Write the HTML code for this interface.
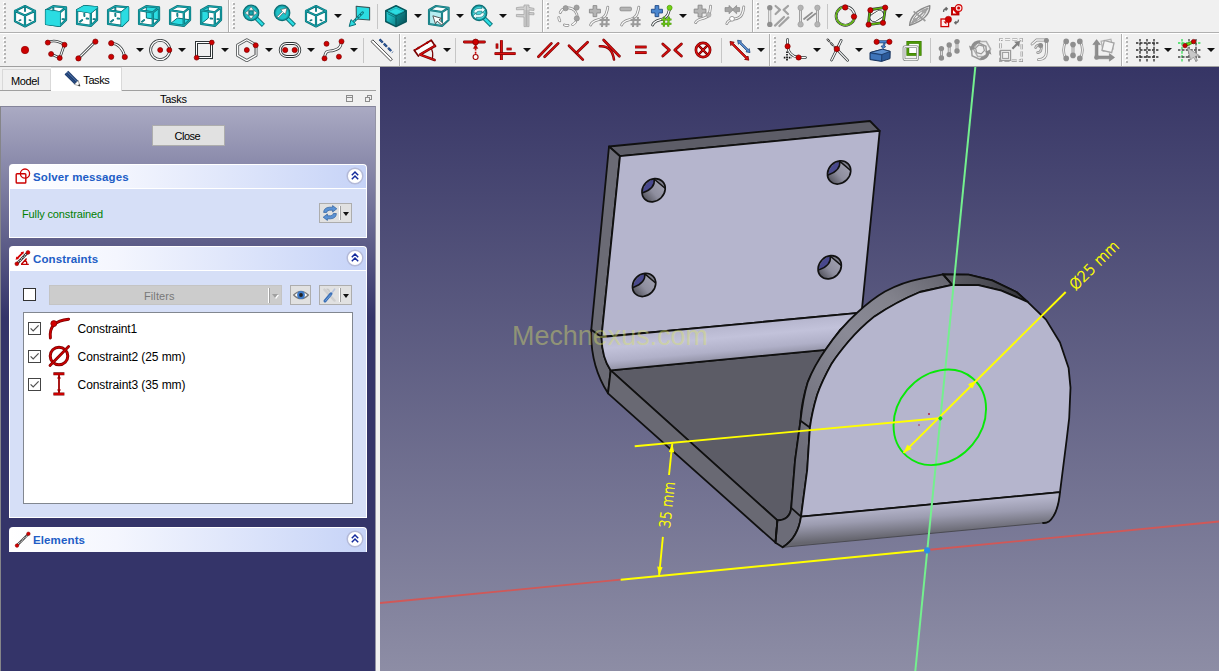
<!DOCTYPE html>
<html lang="en"><head><meta charset="utf-8"><title>FreeCAD Sketcher</title>
<style>
html,body{margin:0;padding:0;}
body{width:1219px;height:671px;overflow:hidden;background:#f0f0f0;font-family:"Liberation Sans",sans-serif;font-size:11px;color:#000;}
#app{position:relative;width:1219px;height:671px;overflow:hidden;background:#f0f0f0;}
.abs{position:absolute;}
#tb{position:absolute;left:0;top:0;width:1219px;height:67px;background:#f0f0f0;}
#tb .line1{position:absolute;left:0;top:32px;width:1219px;height:1px;background:#b0b0b0;}
#tb .line1b{position:absolute;left:0;top:33px;width:1219px;height:1px;background:#fff;}
#tb .line2{position:absolute;left:0;top:66px;width:1219px;height:1px;background:#a0a0a0;}
#tb svg{position:absolute;overflow:visible;}
.sep{position:absolute;width:1px;background:#c8c8c8;}
.dd{position:absolute;width:0;height:0;border-left:4px solid transparent;border-right:4px solid transparent;border-top:4.5px solid #111;}
#side{position:absolute;left:0;top:67px;width:380px;height:604px;background:#f0f0f0;}
#side svg{position:absolute;overflow:visible;}
#tabline{position:absolute;left:0;top:23px;width:376px;height:1px;background:#a0a0a0;}
.tab{position:absolute;box-sizing:border-box;font-size:11px;}
#tabModel{left:2px;top:2px;width:49px;height:21px;border:1px solid #d9d9d9;border-bottom:none;background:#f0f0f0;}
#tabTasks{left:51px;top:0px;width:71px;height:24px;border:1px solid #d9d9d9;border-left:none;border-bottom:none;background:#fff;}
.tab span{position:absolute;white-space:nowrap;}
#dockTitle{position:absolute;left:0;top:24px;width:376px;height:15px;}
#dockTitle span{position:absolute;left:160px;top:2px;white-space:nowrap;letter-spacing:-0.3px;}
#tp{position:absolute;left:0;top:39px;width:376px;height:565px;box-sizing:border-box;border-left:1px solid #858589;border-top:1px solid #84849a;border-right:1px solid #9494a4;
 background:linear-gradient(to bottom,#aaaac3 0px,#343469 210px,#343469 100%);}
#closeBtn{position:absolute;left:152px;top:58px;width:73px;height:21px;box-sizing:border-box;border:1px solid #adadad;background:#e1e1e1;font-size:11px;}
#closeBtn span{position:absolute;left:21.6px;top:4px;letter-spacing:-0.5px;white-space:nowrap;}
.box{position:absolute;left:9px;width:358px;}
.bh{position:absolute;left:0;top:0;width:358px;height:24px;box-sizing:border-box;border-radius:4px 4px 0 0;border:1px solid #fff;border-bottom:none;background:linear-gradient(to right,#ffffff 0%,#f4f6fe 30%,#c6d3f7 100%);}
.bh b{position:absolute;left:23px;top:6px;color:#215dc6;font-size:11.5px;font-weight:bold;white-space:nowrap;letter-spacing:0.12px;}
.bb{position:absolute;left:0;top:24px;width:358px;box-sizing:border-box;border:1px solid #fff;background:#d6dff7;}
.btn{position:absolute;box-sizing:border-box;border:1px solid #adadad;background:#e1e1e1;}
.cb{position:absolute;box-sizing:border-box;width:13px;height:13px;border:1px solid #333;background:#fff;}
#list{position:absolute;left:13px;top:41px;width:330px;height:192px;box-sizing:border-box;border:1px solid #828790;background:#fff;}
.row{position:absolute;left:0;width:328px;height:28px;font-size:12px;}
.row span{position:absolute;left:53.6px;top:7px;white-space:nowrap;}
#combo{position:absolute;left:39px;top:14px;width:233px;height:20px;box-sizing:border-box;border:1px solid #c4c4c4;background:#cccccc;color:#787878;}
#combo span{position:absolute;left:94px;top:4px;letter-spacing:0.1px;}

</style></head>
<body>
<div id="app">
<div id="tb"><div class="line1"></div><div class="line1b"></div><div class="line2"></div>
<svg style="left:3px;top:2px" width="4" height="28" viewBox="0 0 4 28"><rect x="0" y="0" width="2" height="2" fill="#ffffff"/><rect x="1" y="1" width="2" height="2" fill="#b4b4b4"/><rect x="0" y="4" width="2" height="2" fill="#ffffff"/><rect x="1" y="5" width="2" height="2" fill="#b4b4b4"/><rect x="0" y="8" width="2" height="2" fill="#ffffff"/><rect x="1" y="9" width="2" height="2" fill="#b4b4b4"/><rect x="0" y="12" width="2" height="2" fill="#ffffff"/><rect x="1" y="13" width="2" height="2" fill="#b4b4b4"/><rect x="0" y="16" width="2" height="2" fill="#ffffff"/><rect x="1" y="17" width="2" height="2" fill="#b4b4b4"/><rect x="0" y="20" width="2" height="2" fill="#ffffff"/><rect x="1" y="21" width="2" height="2" fill="#b4b4b4"/><rect x="0" y="24" width="2" height="2" fill="#ffffff"/><rect x="1" y="25" width="2" height="2" fill="#b4b4b4"/></svg>
<svg style="left:13px;top:4px" width="24" height="24" viewBox="0 0 24 24"><path d="M12,2 L22,6.9 L22,17.3 L12,22.4 L2,17.3 L2,6.9 Z" fill="#ffffff"/><ellipse cx="7" cy="16.2" rx="1.6" ry="0.8" fill="#0b6f75" transform="rotate(-20 7 16.2)"/><ellipse cx="17" cy="16.2" rx="1.6" ry="0.8" fill="#0b6f75" transform="rotate(20 17 16.2)"/><path d="M12,2 L12,7" fill="none" stroke="#0b6f75" stroke-width="1.8" stroke-linejoin="round" stroke-linecap="round"/><path d="M12,2 L12,7" fill="none" stroke="#17a5ac" stroke-width="0.6000000000000001" stroke-linejoin="round" stroke-linecap="round"/><path d="M12,2 L22,6.9 L22,17.3 L12,22.4 L2,17.3 L2,6.9 Z M2,6.9 L12,11.4 L22,6.9 M12,11.4 L12,22.4" fill="none" stroke="#0b6f75" stroke-width="2.2" stroke-linejoin="round" stroke-linecap="round"/><path d="M12,2 L22,6.9 L22,17.3 L12,22.4 L2,17.3 L2,6.9 Z M2,6.9 L12,11.4 L22,6.9 M12,11.4 L12,22.4" fill="none" stroke="#17a5ac" stroke-width="1.0000000000000002" stroke-linejoin="round" stroke-linecap="round"/></svg>
<svg style="left:44px;top:4px" width="24" height="24" viewBox="0 0 24 24"><path d="M2.1,6.2 L9.2,2.2 L22,3.4 L22,15.8 L15.8,21.8 L2.1,19.9 Z" fill="#ffffff"/><path d="M18.4,15.1 L20,15.2 M9.3,3.6 L9.4,6.6 " fill="none" stroke="#0b6f75" stroke-width="1.9" stroke-linecap="round"/><path d="M18.4,15.1 L20,15.2 M9.3,3.6 L9.4,6.6 " fill="none" stroke="#17a5ac" stroke-width="0.6" stroke-linecap="round"/><path d="M2.1,6.2 L15.8,8.4 L15.8,21.8 L2.1,19.9 Z M2.1,6.2 L9.2,2.2 L22,3.4 L15.8,8.4 M22,3.4 L22,15.8 L15.8,21.8" fill="none" stroke="#0b6f75" stroke-width="2.3" stroke-linejoin="round" stroke-linecap="round"/><path d="M2.1,6.2 L15.8,8.4 L15.8,21.8 L2.1,19.9 Z M2.1,6.2 L9.2,2.2 L22,3.4 L15.8,8.4 M22,3.4 L22,15.8 L15.8,21.8" fill="none" stroke="#17a5ac" stroke-width="1.0999999999999999" stroke-linejoin="round" stroke-linecap="round"/><path d="M2.1,6.2 L15.8,8.4 L15.8,21.8 L2.1,19.9 Z" fill="#2bdce2" stroke="#0b6f75" stroke-width="2.3" stroke-linejoin="round"/><path d="M2.1,6.2 L15.8,8.4 L15.8,21.8 L2.1,19.9 Z" fill="#2bdce2" stroke="#2bdce2" stroke-width="1.1" stroke-linejoin="round"/></svg>
<svg style="left:75px;top:4px" width="24" height="24" viewBox="0 0 24 24"><path d="M2.1,6.2 L9.2,2.2 L22,3.4 L22,15.8 L15.8,21.8 L2.1,19.9 Z" fill="#ffffff"/><path d="M9.3,9.6 L9.4,12 M11.6,14.5 L13.2,14.6 M18.4,15.1 L20,15.2 M5,17.7 L7.2,16 " fill="none" stroke="#0b6f75" stroke-width="1.9" stroke-linecap="round"/><path d="M9.3,9.6 L9.4,12 M11.6,14.5 L13.2,14.6 M18.4,15.1 L20,15.2 M5,17.7 L7.2,16 " fill="none" stroke="#17a5ac" stroke-width="0.6" stroke-linecap="round"/><path d="M2.1,6.2 L15.8,8.4 L15.8,21.8 L2.1,19.9 Z M2.1,6.2 L9.2,2.2 L22,3.4 L15.8,8.4 M22,3.4 L22,15.8 L15.8,21.8" fill="none" stroke="#0b6f75" stroke-width="2.3" stroke-linejoin="round" stroke-linecap="round"/><path d="M2.1,6.2 L15.8,8.4 L15.8,21.8 L2.1,19.9 Z M2.1,6.2 L9.2,2.2 L22,3.4 L15.8,8.4 M22,3.4 L22,15.8 L15.8,21.8" fill="none" stroke="#17a5ac" stroke-width="1.0999999999999999" stroke-linejoin="round" stroke-linecap="round"/><path d="M2.1,6.2 L9.2,2.2 L22,3.4 L15.8,8.4 Z" fill="#2bdce2" stroke="#0b6f75" stroke-width="2.3" stroke-linejoin="round"/><path d="M2.1,6.2 L9.2,2.2 L22,3.4 L15.8,8.4 Z" fill="#2bdce2" stroke="#2bdce2" stroke-width="1.1" stroke-linejoin="round"/></svg>
<svg style="left:106px;top:4px" width="24" height="24" viewBox="0 0 24 24"><path d="M2.1,6.2 L9.2,2.2 L22,3.4 L22,15.8 L15.8,21.8 L2.1,19.9 Z" fill="#ffffff"/><path d="M9.3,9.6 L9.4,12 M11.6,14.5 L13.2,14.6 M5,17.7 L7.2,16 M9.3,3.6 L9.4,6.6 " fill="none" stroke="#0b6f75" stroke-width="1.9" stroke-linecap="round"/><path d="M9.3,9.6 L9.4,12 M11.6,14.5 L13.2,14.6 M5,17.7 L7.2,16 M9.3,3.6 L9.4,6.6 " fill="none" stroke="#17a5ac" stroke-width="0.6" stroke-linecap="round"/><path d="M2.1,6.2 L15.8,8.4 L15.8,21.8 L2.1,19.9 Z M2.1,6.2 L9.2,2.2 L22,3.4 L15.8,8.4 M22,3.4 L22,15.8 L15.8,21.8" fill="none" stroke="#0b6f75" stroke-width="2.3" stroke-linejoin="round" stroke-linecap="round"/><path d="M2.1,6.2 L15.8,8.4 L15.8,21.8 L2.1,19.9 Z M2.1,6.2 L9.2,2.2 L22,3.4 L15.8,8.4 M22,3.4 L22,15.8 L15.8,21.8" fill="none" stroke="#17a5ac" stroke-width="1.0999999999999999" stroke-linejoin="round" stroke-linecap="round"/><path d="M15.8,8.4 L22,3.4 L22,15.8 L15.8,21.8 Z" fill="#2bdce2" stroke="#0b6f75" stroke-width="2.3" stroke-linejoin="round"/><path d="M15.8,8.4 L22,3.4 L22,15.8 L15.8,21.8 Z" fill="#2bdce2" stroke="#2bdce2" stroke-width="1.1" stroke-linejoin="round"/></svg>
<svg style="left:137px;top:4px" width="24" height="24" viewBox="0 0 24 24"><path d="M2.1,6.2 L9.2,2.2 L22,3.4 L22,15.8 L15.8,21.8 L2.1,19.9 Z" fill="#ffffff"/><path d="M9.2,2.2 L22,3.4 L22,15.8 L9.4,14 Z" fill="#2bdce2" stroke="#0b6f75" stroke-width="1" stroke-linejoin="round"/><path d="M5,17.7 L7.2,16 " fill="none" stroke="#0b6f75" stroke-width="1.9" stroke-linecap="round"/><path d="M5,17.7 L7.2,16 " fill="none" stroke="#17a5ac" stroke-width="0.6" stroke-linecap="round"/><path d="M2.1,6.2 L15.8,8.4 L15.8,21.8 L2.1,19.9 Z M2.1,6.2 L9.2,2.2 L22,3.4 L15.8,8.4 M22,3.4 L22,15.8 L15.8,21.8" fill="none" stroke="#0b6f75" stroke-width="2.3" stroke-linejoin="round" stroke-linecap="round"/><path d="M2.1,6.2 L15.8,8.4 L15.8,21.8 L2.1,19.9 Z M2.1,6.2 L9.2,2.2 L22,3.4 L15.8,8.4 M22,3.4 L22,15.8 L15.8,21.8" fill="none" stroke="#17a5ac" stroke-width="1.0999999999999999" stroke-linejoin="round" stroke-linecap="round"/></svg>
<svg style="left:168px;top:4px" width="24" height="24" viewBox="0 0 24 24"><path d="M2.1,6.2 L9.2,2.2 L22,3.4 L22,15.8 L15.8,21.8 L2.1,19.9 Z" fill="#ffffff"/><path d="M2.1,19.9 L15.8,21.8 L22,15.8 L9.4,14 Z" fill="#2bdce2" stroke="#0b6f75" stroke-width="1" stroke-linejoin="round"/><path d="M9.3,9.6 L9.4,12 " fill="none" stroke="#0b6f75" stroke-width="1.9" stroke-linecap="round"/><path d="M9.3,9.6 L9.4,12 " fill="none" stroke="#17a5ac" stroke-width="0.6" stroke-linecap="round"/><path d="M2.1,6.2 L15.8,8.4 L15.8,21.8 L2.1,19.9 Z M2.1,6.2 L9.2,2.2 L22,3.4 L15.8,8.4 M22,3.4 L22,15.8 L15.8,21.8" fill="none" stroke="#0b6f75" stroke-width="2.3" stroke-linejoin="round" stroke-linecap="round"/><path d="M2.1,6.2 L15.8,8.4 L15.8,21.8 L2.1,19.9 Z M2.1,6.2 L9.2,2.2 L22,3.4 L15.8,8.4 M22,3.4 L22,15.8 L15.8,21.8" fill="none" stroke="#17a5ac" stroke-width="1.0999999999999999" stroke-linejoin="round" stroke-linecap="round"/></svg>
<svg style="left:199px;top:4px" width="24" height="24" viewBox="0 0 24 24"><path d="M2.1,6.2 L9.2,2.2 L22,3.4 L22,15.8 L15.8,21.8 L2.1,19.9 Z" fill="#ffffff"/><path d="M2.1,6.2 L9.2,2.2 L9.4,14 L2.1,19.9 Z" fill="#2bdce2" stroke="#0b6f75" stroke-width="1" stroke-linejoin="round"/><path d="M11.6,14.5 L13.2,14.6 M18.4,15.1 L20,15.2 " fill="none" stroke="#0b6f75" stroke-width="1.9" stroke-linecap="round"/><path d="M11.6,14.5 L13.2,14.6 M18.4,15.1 L20,15.2 " fill="none" stroke="#17a5ac" stroke-width="0.6" stroke-linecap="round"/><path d="M2.1,6.2 L15.8,8.4 L15.8,21.8 L2.1,19.9 Z M2.1,6.2 L9.2,2.2 L22,3.4 L15.8,8.4 M22,3.4 L22,15.8 L15.8,21.8" fill="none" stroke="#0b6f75" stroke-width="2.3" stroke-linejoin="round" stroke-linecap="round"/><path d="M2.1,6.2 L15.8,8.4 L15.8,21.8 L2.1,19.9 Z M2.1,6.2 L9.2,2.2 L22,3.4 L15.8,8.4 M22,3.4 L22,15.8 L15.8,21.8" fill="none" stroke="#17a5ac" stroke-width="1.0999999999999999" stroke-linejoin="round" stroke-linecap="round"/></svg>
<div class="sep" style="left:228px;top:0px;height:32px;background:#b0b0b0"></div><div class="sep" style="left:229px;top:0px;height:32px;background:#ffffff"></div>
<svg style="left:232px;top:2px" width="4" height="28" viewBox="0 0 4 28"><rect x="0" y="0" width="2" height="2" fill="#ffffff"/><rect x="1" y="1" width="2" height="2" fill="#b4b4b4"/><rect x="0" y="4" width="2" height="2" fill="#ffffff"/><rect x="1" y="5" width="2" height="2" fill="#b4b4b4"/><rect x="0" y="8" width="2" height="2" fill="#ffffff"/><rect x="1" y="9" width="2" height="2" fill="#b4b4b4"/><rect x="0" y="12" width="2" height="2" fill="#ffffff"/><rect x="1" y="13" width="2" height="2" fill="#b4b4b4"/><rect x="0" y="16" width="2" height="2" fill="#ffffff"/><rect x="1" y="17" width="2" height="2" fill="#b4b4b4"/><rect x="0" y="20" width="2" height="2" fill="#ffffff"/><rect x="1" y="21" width="2" height="2" fill="#b4b4b4"/><rect x="0" y="24" width="2" height="2" fill="#ffffff"/><rect x="1" y="25" width="2" height="2" fill="#b4b4b4"/></svg>
<svg style="left:242px;top:4px" width="24" height="24" viewBox="0 0 24 24"><path d="M13.2,13.2 L21.4,21.4" stroke="#0b6f75" stroke-width="4.4" stroke-linecap="butt"/><path d="M13.6,13.6 L20.9,20.9" stroke="#2bdce2" stroke-width="2.6" stroke-linecap="butt"/><circle cx="9.1" cy="8.9" r="7.7" fill="#17a5ac" stroke="#0b6f75" stroke-width="1.2"/><circle cx="9.1" cy="8.9" r="6" fill="#1fc3c9"/><path d="M9.1,2.8 L11.6,6.2 L6.6,6.2 Z M9.1,15 L11.6,11.6 L6.6,11.6 Z M3,8.9 L6.4,6.4 L6.4,11.4 Z M15.2,8.9 L11.8,6.4 L11.8,11.4 Z" fill="#ffffff" stroke="#444" stroke-width="0.5"/><rect x="7.3" y="7.1" width="3.6" height="3.6" fill="#17a5ac" stroke="#0b6f75" stroke-width="0.6"/></svg>
<svg style="left:273px;top:4px" width="24" height="24" viewBox="0 0 24 24"><path d="M13.2,13.2 L21.4,21.4" stroke="#0b6f75" stroke-width="4.4" stroke-linecap="butt"/><path d="M13.6,13.6 L20.9,20.9" stroke="#2bdce2" stroke-width="2.6" stroke-linecap="butt"/><circle cx="9.1" cy="8.9" r="7.7" fill="#17a5ac" stroke="#0b6f75" stroke-width="1.2"/><circle cx="9.1" cy="8.9" r="6" fill="#1fc3c9"/><path d="M4.2,12.6 L9.4,7.4 L7.6,5.6 L14,4 L12.4,10.4 L10.6,8.6 L5.4,13.8 Z" fill="#ffffff" stroke="#444" stroke-width="0.6" stroke-linejoin="round"/></svg>
<svg style="left:304px;top:4px" width="24" height="24" viewBox="0 0 24 24"><path d="M12,2 L22,6.9 L22,17.3 L12,22.4 L2,17.3 L2,6.9 Z" fill="#ffffff"/><ellipse cx="7" cy="16.2" rx="1.6" ry="0.8" fill="#0b6f75" transform="rotate(-20 7 16.2)"/><ellipse cx="17" cy="16.2" rx="1.6" ry="0.8" fill="#0b6f75" transform="rotate(20 17 16.2)"/><path d="M12,2 L12,7" fill="none" stroke="#0b6f75" stroke-width="1.8" stroke-linejoin="round" stroke-linecap="round"/><path d="M12,2 L12,7" fill="none" stroke="#17a5ac" stroke-width="0.6000000000000001" stroke-linejoin="round" stroke-linecap="round"/><path d="M12,2 L22,6.9 L22,17.3 L12,22.4 L2,17.3 L2,6.9 Z M2,6.9 L12,11.4 L22,6.9 M12,11.4 L12,22.4" fill="none" stroke="#0b6f75" stroke-width="2.2" stroke-linejoin="round" stroke-linecap="round"/><path d="M12,2 L22,6.9 L22,17.3 L12,22.4 L2,17.3 L2,6.9 Z M2,6.9 L12,11.4 L22,6.9 M12,11.4 L12,22.4" fill="none" stroke="#17a5ac" stroke-width="1.0000000000000002" stroke-linejoin="round" stroke-linecap="round"/></svg>
<div class="dd" style="left:333.8px;top:13.8px"></div>
<svg style="left:348px;top:4px" width="24" height="24" viewBox="0 0 24 24"><path d="M8.2,2.2 L21.6,3.6 L21.6,16 L8.4,15 Z" fill="#2bdce2" stroke="#3a5a5c" stroke-width="1.1" stroke-linejoin="round"/><path d="M14.6,8.6 L5,18.4" stroke="#0b6f75" stroke-width="2.6" stroke-linecap="round"/><path d="M14.6,8.6 L5,18.4" stroke="#2bdce2" stroke-width="1.1" stroke-dasharray="2.2 1.4"/><path d="M1.2,22.4 L3,15.6 L8,20.4 Z" fill="#2bdce2" stroke="#0b6f75" stroke-width="1" stroke-linejoin="round"/></svg>
<div class="sep" style="left:377px;top:4px;height:25px;background:#c6c6c6"></div>
<svg style="left:384px;top:4px" width="24" height="24" viewBox="0 0 24 24"><defs><linearGradient id="sc1" x1="0" y1="0" x2="1" y2="1"><stop offset="0" stop-color="#2bdce2"/><stop offset="1" stop-color="#0e7f86"/></linearGradient><linearGradient id="sc2" x1="0" y1="0" x2="1" y2="1"><stop offset="0" stop-color="#12959c"/><stop offset="1" stop-color="#064a50"/></linearGradient></defs><path d="M12,1.6 L22.4,6.6 L12,11.6 L1.6,6.6 Z" fill="#2bdce2"/><path d="M1.6,6.6 L12,11.6 L12,22.8 L1.6,17.6 Z" fill="url(#sc1)"/><path d="M22.4,6.6 L12,11.6 L12,22.8 L22.4,17.6 Z" fill="url(#sc2)"/><path d="M12,1.8 L22.2,6.7 L22.2,17.5 L12,22.6 L1.8,17.5 L1.8,6.7 Z" fill="none" stroke="#07565b" stroke-width="1.5" stroke-linejoin="round"/><path d="M1.8,6.7 L12,11.7 L22.2,6.7 M12,11.7 L12,22.6" fill="none" stroke="#07565b" stroke-width="1.1"/><path d="M3.6,9.6 L12,13.8 L20.4,9.6" fill="none" stroke="#0a7a80" stroke-width="0.9"/><path d="M12,4 L19.4,7.6 L12,11 L4.6,7.6 Z" fill="none" stroke="#17a5ac" stroke-width="0.8"/></svg>
<div class="dd" style="left:413.5px;top:13.8px"></div>
<svg style="left:427px;top:4px" width="24" height="24" viewBox="0 0 24 24"><path d="M2,6 L9,2 L21.6,3.8 L21.6,16 L15,22 L2,20 Z" fill="#ffffff"/><path d="M2.6,6.6 L15,8.4 L15,21.4 L2.6,19.6 Z" fill="#b5ecf0"/><path d="M2,6 L15,8 L15,22 L2,20 Z M2,6 L9,2 L21.6,3.8 L15,8 M21.6,3.8 L21.6,16 L15,22" fill="none" stroke="#0b6f75" stroke-width="2.1" stroke-linejoin="round"/><path d="M2,6 L15,8 L15,22 L2,20 Z M2,6 L9,2 L21.6,3.8 L15,8 M21.6,3.8 L21.6,16 L15,22" fill="none" stroke="#3aa9af" stroke-width="0.7" stroke-linejoin="round"/><path d="M7,11 L7,19.5 L9.4,17.4 L12.6,22.4 L14.4,21.4 L11.6,16.6 L14.6,16.2 Z" fill="#ffffff" stroke="#555" stroke-width="0.9" stroke-linejoin="round" transform="rotate(-18 9 15)"/></svg>
<div class="dd" style="left:456.4px;top:13.8px"></div>
<svg style="left:470px;top:4px" width="24" height="24" viewBox="0 0 24 24"><path d="M13.2,13.2 L21.4,21.4" stroke="#0b6f75" stroke-width="4.4" stroke-linecap="butt"/><path d="M13.6,13.6 L20.9,20.9" stroke="#2bdce2" stroke-width="2.6" stroke-linecap="butt"/><circle cx="9.1" cy="8.9" r="7.7" fill="#17a5ac" stroke="#0b6f75" stroke-width="1.2"/><circle cx="9.1" cy="8.9" r="6" fill="#1fc3c9"/><circle cx="9.1" cy="8.9" r="6" fill="#4fd6db"/><path d="M3.6,8.6 Q4.6,4.4 9,4.4 L12,4.4 L12,2.6 L15.2,5.8 L12,9 L12,7.2 L9,7.2 Q6.8,7.2 6.4,9.2 Z" fill="#e8fafb" stroke="#0b6f75" stroke-width="0.6"/><path d="M14.6,9.2 Q13.6,13.4 9.2,13.4 L6.2,13.4 L6.2,15.2 L3,12 L6.2,8.8 L6.2,10.6 L9.2,10.6 Q11.4,10.6 11.8,8.6 Z" fill="#e8fafb" stroke="#0b6f75" stroke-width="0.6"/></svg>
<div class="dd" style="left:499.3px;top:13.8px"></div>
<svg style="left:513px;top:4px" width="24" height="24" viewBox="0 0 24 24"><path d="M3.4,3.6 L8,3 L11,3 L11,1 L16,1 L16,3.4 L21,4.4 L21,6.4 L16,6 L16,22.6 L11,22.6 L11,13 L3.4,12.6 L3.4,10.4 L11,10.6 L11,5.6 L3.4,5.8 Z" fill="#d0d0d0" stroke="#a6a6a6" stroke-width="0.8" stroke-linejoin="round"/><path d="M16,8.4 L21,8.8 L21,10.8 L16,10.6 Z" fill="#d0d0d0" stroke="#a6a6a6" stroke-width="0.8"/><path d="M12,7 L15,7 M12,9 L15,9 M12,11 L15,11 M12,13 L15,13 M12,15 L15,15 M12,17 L15,17 M12,19 L15,19 M12,21 L15,21" stroke="#a6a6a6" stroke-width="0.7"/><path d="M13.5,2 L13.5,22" stroke="#a6a6a6" stroke-width="0.6"/></svg>
<div class="sep" style="left:542px;top:0px;height:32px;background:#b0b0b0"></div><div class="sep" style="left:543px;top:0px;height:32px;background:#ffffff"></div>
<svg style="left:546px;top:2px" width="4" height="28" viewBox="0 0 4 28"><rect x="0" y="0" width="2" height="2" fill="#ffffff"/><rect x="1" y="1" width="2" height="2" fill="#b4b4b4"/><rect x="0" y="4" width="2" height="2" fill="#ffffff"/><rect x="1" y="5" width="2" height="2" fill="#b4b4b4"/><rect x="0" y="8" width="2" height="2" fill="#ffffff"/><rect x="1" y="9" width="2" height="2" fill="#b4b4b4"/><rect x="0" y="12" width="2" height="2" fill="#ffffff"/><rect x="1" y="13" width="2" height="2" fill="#b4b4b4"/><rect x="0" y="16" width="2" height="2" fill="#ffffff"/><rect x="1" y="17" width="2" height="2" fill="#b4b4b4"/><rect x="0" y="20" width="2" height="2" fill="#ffffff"/><rect x="1" y="21" width="2" height="2" fill="#b4b4b4"/><rect x="0" y="24" width="2" height="2" fill="#ffffff"/><rect x="1" y="25" width="2" height="2" fill="#b4b4b4"/></svg>
<svg style="left:557px;top:4px" width="24" height="24" viewBox="0 0 24 24"><path d="M3.2,8.6 Q4.2,6.4 5.6,5.4" stroke="#8c8c8c" stroke-width="2.8" stroke-linecap="round" fill="none"/><path d="M3.2,8.6 Q4.2,6.4 5.6,5.4" stroke="#fff" stroke-width="1.3" stroke-linecap="round" fill="none"/><path d="M1.8,13.6 Q2,15.6 2.8,16.8" stroke="#8c8c8c" stroke-width="2.8" stroke-linecap="round" fill="none"/><path d="M1.8,13.6 Q2,15.6 2.8,16.8" stroke="#fff" stroke-width="1.3" stroke-linecap="round" fill="none"/><path d="M7.4,21 Q9.4,21.8 11,21.4" stroke="#8c8c8c" stroke-width="2.8" stroke-linecap="round" fill="none"/><path d="M7.4,21 Q9.4,21.8 11,21.4" stroke="#fff" stroke-width="1.3" stroke-linecap="round" fill="none"/><path d="M15.6,20.6 Q17.6,19.4 18.6,18" stroke="#8c8c8c" stroke-width="2.8" stroke-linecap="round" fill="none"/><path d="M15.6,20.6 Q17.6,19.4 18.6,18" stroke="#fff" stroke-width="1.3" stroke-linecap="round" fill="none"/><path d="M8.6,4.4 Q14,2.6 18,7 Q20.4,10 20.6,14.2" fill="none" stroke="#8c8c8c" stroke-width="2.6" stroke-linecap="round"/><path d="M8.6,4.4 Q14,2.6 18,7 Q20.4,10 20.6,14.2" fill="none" stroke="#f4f4f4" stroke-width="1.1" stroke-linecap="round"/><circle cx="8.6" cy="4.2" r="2.6" fill="#a0a0a0" stroke="#8a8a8a" stroke-width="0.6"/><circle cx="19.6" cy="3.6" r="2.6" fill="#a0a0a0" stroke="#8a8a8a" stroke-width="0.6"/><circle cx="19.8" cy="14.4" r="2.6" fill="#a0a0a0" stroke="#8a8a8a" stroke-width="0.6"/></svg>
<svg style="left:588px;top:4px" width="24" height="24" viewBox="0 0 24 24"><path d="M2.6,21 C5,14 15,18 18,10 C19.4,6 19.6,4.6 19.8,3.2" fill="none" stroke="#8c8c8c" stroke-width="2.8" stroke-linecap="round"/><path d="M2.6,21 C5,14 15,18 18,10 C19.4,6 19.6,4.6 19.8,3.2" fill="none" stroke="#f8f8f8" stroke-width="1.2999999999999998" stroke-linecap="round"/><path transform="translate(1.4,1.6) scale(0.92)" d="M4,0 h4 v4 h4 v4 h-4 v4 h-4 v-4 h-4 v-4 h4 Z" fill="#b4b4b4" stroke="#8c8c8c" stroke-width="1" stroke-linejoin="round"/><g transform="translate(11.6,13) scale(1.0)" stroke="#9a9a9a" stroke-width="2" stroke-linecap="butt"><path d="M3,0 L2.4,10 M7.4,0 L6.8,10 M0,3 L10,3 M0,7.2 L10,7.2"/></g></svg>
<svg style="left:619px;top:4px" width="24" height="24" viewBox="0 0 24 24"><path d="M2.6,21 C5,14 15,18 18,10 C19.4,6 19.6,4.6 19.8,3.2" fill="none" stroke="#8c8c8c" stroke-width="2.8" stroke-linecap="round"/><path d="M2.6,21 C5,14 15,18 18,10 C19.4,6 19.6,4.6 19.8,3.2" fill="none" stroke="#f8f8f8" stroke-width="1.2999999999999998" stroke-linecap="round"/><rect x="1" y="3.2" width="11.4" height="3.6" rx="1" fill="#b4b4b4" stroke="#8c8c8c" stroke-width="0.9"/><g transform="translate(11.6,13) scale(1.0)" stroke="#9a9a9a" stroke-width="2" stroke-linecap="butt"><path d="M3,0 L2.4,10 M7.4,0 L6.8,10 M0,3 L10,3 M0,7.2 L10,7.2"/></g></svg>
<svg style="left:650px;top:4px" width="24" height="24" viewBox="0 0 24 24"><path d="M2.6,21 C5,14 15,18 18,10 C19,7 19.4,6 19.6,5" fill="none" stroke="#2e3436" stroke-width="2.8" stroke-linecap="round"/><path d="M2.6,21 C5,14 15,18 18,10 C19,7 19.4,6 19.6,5" fill="none" stroke="#ffffff" stroke-width="1.2999999999999998" stroke-linecap="round"/><path transform="translate(1.4,1.6) scale(0.92)" d="M4,0 h4 v4 h4 v4 h-4 v4 h-4 v-4 h-4 v-4 h4 Z" fill="#4a86cf" stroke="#204a87" stroke-width="1" stroke-linejoin="round"/><g transform="translate(11.4,12.6) scale(1.0)" stroke="#3f8a0a" stroke-width="2" stroke-linecap="butt"><path d="M3,0 L2.4,10 M7.4,0 L6.8,10 M0,3 L10,3 M0,7.2 L10,7.2"/></g><path transform="translate(11.4,12.6)" d="M3,0 L2.4,10 M7.4,0 L6.8,10 M0,3 L10,3 M0,7.2 L10,7.2" stroke="#73d216" stroke-width="0.9"/><circle cx="19.6" cy="3.8" r="2.5" fill="#73d216" stroke="#4e9a06" stroke-width="0.7"/></svg>
<div class="dd" style="left:678.5px;top:13.8px"></div>
<svg style="left:693px;top:4px" width="24" height="24" viewBox="0 0 24 24"><path d="M2.6,18.6 C5,13 13,16 15.6,11 C17,8.4 17.4,5 17.6,2.2" fill="none" stroke="#8c8c8c" stroke-width="2.8" stroke-linecap="round"/><path d="M2.6,18.6 C5,13 13,16 15.6,11 C17,8.4 17.4,5 17.6,2.2" fill="none" stroke="#f8f8f8" stroke-width="1.2999999999999998" stroke-linecap="round"/><path transform="translate(1.2,1.2) scale(0.98)" d="M4,0 h4 v4 h4 v4 h-4 v4 h-4 v-4 h-4 v-4 h4 Z" fill="#b4b4b4" stroke="#8c8c8c" stroke-width="1" stroke-linejoin="round"/><circle cx="15.6" cy="10.8" r="2.4" fill="#b8b8b8" stroke="#999" stroke-width="0.6"/></svg>
<svg style="left:724px;top:4px" width="24" height="24" viewBox="0 0 24 24"><path d="M2.8,19.6 C5,13 14,17.4 17.6,11 C19.4,7.6 19.6,5 19.8,2.8" fill="none" stroke="#8c8c8c" stroke-width="2.8" stroke-linecap="round"/><path d="M2.8,19.6 C5,13 14,17.4 17.6,11 C19.4,7.6 19.6,5 19.8,2.8" fill="none" stroke="#f8f8f8" stroke-width="1.2999999999999998" stroke-linecap="round"/><path d="M1,3.6 h4 v-2.2 l4.4,4.2 l-4.4,4.2 v-2.2 h-4 Z M15.6,3.6 h-3 v-2.2 l-4.4,4.2 l4.4,4.2 v-2.2 h3 Z" fill="#a4a4a4" stroke="#7d7d7d" stroke-width="0.6"/><circle cx="8" cy="14.8" r="2.4" fill="#ffffff" stroke="#8a8a8a" stroke-width="0.8"/></svg>
<div class="sep" style="left:752px;top:0px;height:32px;background:#b0b0b0"></div><div class="sep" style="left:753px;top:0px;height:32px;background:#ffffff"></div>
<svg style="left:756px;top:2px" width="4" height="28" viewBox="0 0 4 28"><rect x="0" y="0" width="2" height="2" fill="#ffffff"/><rect x="1" y="1" width="2" height="2" fill="#b4b4b4"/><rect x="0" y="4" width="2" height="2" fill="#ffffff"/><rect x="1" y="5" width="2" height="2" fill="#b4b4b4"/><rect x="0" y="8" width="2" height="2" fill="#ffffff"/><rect x="1" y="9" width="2" height="2" fill="#b4b4b4"/><rect x="0" y="12" width="2" height="2" fill="#ffffff"/><rect x="1" y="13" width="2" height="2" fill="#b4b4b4"/><rect x="0" y="16" width="2" height="2" fill="#ffffff"/><rect x="1" y="17" width="2" height="2" fill="#b4b4b4"/><rect x="0" y="20" width="2" height="2" fill="#ffffff"/><rect x="1" y="21" width="2" height="2" fill="#b4b4b4"/><rect x="0" y="24" width="2" height="2" fill="#ffffff"/><rect x="1" y="25" width="2" height="2" fill="#b4b4b4"/></svg>
<svg style="left:766px;top:4px" width="24" height="24" viewBox="0 0 24 24"><path d="M3.8,4 L3.8,20" fill="none" stroke="#8a8a8a" stroke-width="2.8" stroke-linecap="round"/><path d="M3.8,4 L3.8,20" fill="none" stroke="#f6f6f6" stroke-width="1.2999999999999998" stroke-linecap="round"/><circle cx="3.8" cy="3.8" r="2.7" fill="#8e8e8e"/><circle cx="3.8" cy="20.4" r="2.7" fill="#8e8e8e"/><path d="M9.6,2 L14,5.8 L9.6,10 M22,2 L17.6,5.8 L22,10" fill="none" stroke="#a2a2a2" stroke-width="2.2" stroke-linecap="round" stroke-linejoin="round"/><path d="M9,21.6 L18,13 M13.4,22 L22.4,13.4" fill="none" stroke="#a2a2a2" stroke-width="2.2" stroke-linecap="round"/></svg>
<svg style="left:797px;top:4px" width="24" height="24" viewBox="0 0 24 24"><path d="M3.6,4 L3.6,20" fill="none" stroke="#8a8a8a" stroke-width="2.8" stroke-linecap="round"/><path d="M3.6,4 L3.6,20" fill="none" stroke="#e0e0e0" stroke-width="1.2999999999999998" stroke-linecap="round"/><path d="M20.4,4 L20.4,20" fill="none" stroke="#8a8a8a" stroke-width="2.8" stroke-linecap="round"/><path d="M20.4,4 L20.4,20" fill="none" stroke="#e0e0e0" stroke-width="1.2999999999999998" stroke-linecap="round"/><circle cx="3.6" cy="3.8" r="2.7" fill="#b4b4b4" stroke="#9a9a9a" stroke-width="0.6"/><circle cx="3.6" cy="20.4" r="2.7" fill="#b4b4b4" stroke="#9a9a9a" stroke-width="0.6"/><circle cx="20.4" cy="3.8" r="2.7" fill="#b4b4b4" stroke="#9a9a9a" stroke-width="0.6"/><circle cx="20.4" cy="20.4" r="2.7" fill="#b4b4b4" stroke="#9a9a9a" stroke-width="0.6"/><path d="M7,15 L15,8.6 M10.4,16 L18.4,9.6" fill="none" stroke="#8e8e8e" stroke-width="1.8" stroke-linecap="round"/></svg>
<div class="sep" style="left:827px;top:4px;height:25px;background:#c6c6c6"></div>
<svg style="left:833px;top:4px" width="24" height="24" viewBox="0 0 24 24"><circle cx="12.4" cy="12" r="9.3" fill="none" stroke="#2e3436" stroke-width="2.8"/><circle cx="12.4" cy="12" r="9.3" fill="none" stroke="#ffffff" stroke-width="1.4"/><path d="M12.4,2.7 A9.3,9.3 0 1 0 21.7,12" fill="none" stroke="#5fb30c" stroke-width="1.6"/><circle cx="12.2" cy="3.4" r="2.7" fill="#cf0000" stroke="#7a0000" stroke-width="0.7"/><circle cx="21" cy="12.6" r="2.7" fill="#cf0000" stroke="#7a0000" stroke-width="0.7"/></svg>
<svg style="left:864px;top:4px" width="24" height="24" viewBox="0 0 24 24"><path d="M6,5.8 L21.4,3.4 L19.2,18.6 L4.4,20.6 Z" fill="#ffffff" stroke="#2e3436" stroke-width="2.9" stroke-linejoin="round"/><path d="M6,5.8 L21.4,3.4 L19.2,18.6 L4.4,20.6 Z" fill="none" stroke="#5fb30c" stroke-width="1.6" stroke-linejoin="round"/><rect x="6.6" y="9" width="12.4" height="6" rx="3" fill="#fff" stroke="#2e3436" stroke-width="2.6" transform="rotate(-32 12.8 12)"/><rect x="6.6" y="9" width="12.4" height="6" rx="3" fill="#eeeeee" stroke="#fff" stroke-width="1.1" transform="rotate(-32 12.8 12)"/><circle cx="6.4" cy="6.2" r="2.6" fill="#cf0000" stroke="#7a0000" stroke-width="0.7"/><circle cx="21.2" cy="3.6" r="2.6" fill="#cf0000" stroke="#7a0000" stroke-width="0.7"/><circle cx="19" cy="18.8" r="2.6" fill="#cf0000" stroke="#7a0000" stroke-width="0.7"/><circle cx="4.6" cy="20.6" r="2.6" fill="#cf0000" stroke="#7a0000" stroke-width="0.7"/></svg>
<div class="dd" style="left:894.5px;top:13.8px"></div>
<svg style="left:908px;top:4px" width="24" height="24" viewBox="0 0 24 24"><path d="M1.6,21.4 Q2.6,7.6 21.8,1.6 Q22.4,14.6 1.6,21.4 Z" fill="#e4e4e4" stroke="#888" stroke-width="1.4" stroke-linejoin="round"/><path d="M4.4,18.6 Q6,10 18.6,4.6 Q18,13 4.4,18.6 Z" fill="#f4f4f4" stroke="#909090" stroke-width="1"/><path d="M5.6,7.4 L17.4,17 M3.4,19.6 L20.2,4" stroke="#9c9c9c" stroke-width="1.7"/><rect x="13.8" y="5.4" width="3.6" height="3.6" fill="#a4a4a4"/><rect x="5.2" y="14.2" width="3.6" height="3.6" fill="#a4a4a4"/></svg>
<svg style="left:939px;top:4px" width="24" height="24" viewBox="0 0 24 24"><rect x="12.4" y="3.4" width="7.6" height="7.6" fill="#cf0000" stroke="#a80000" stroke-width="0.8"/><circle cx="19.6" cy="4" r="3.4" fill="#ffe0e0" stroke="#cf0000" stroke-width="1.1"/><circle cx="19.6" cy="4" r="1.5" fill="#cf0000"/><path d="M14,9.4 L14,6 L17.4,9.4 Z" fill="#fff"/><rect x="2" y="15" width="7.6" height="7.6" fill="#fff0f0" stroke="#cf0000" stroke-width="1.3"/><circle cx="9.4" cy="15.4" r="3.2" fill="#cf0000" stroke="#a80000" stroke-width="0.5"/><path d="M4.4,17.6 L7.4,17.6 L7.4,20.6 Z" fill="#cf0000"/><path d="M4.6,8 Q4.4,4.8 7.6,4.8 M6.6,3.4 L8.2,4.8 L6.6,6.4" fill="none" stroke="#666" stroke-width="1.4"/><path d="M19.4,15.6 Q19.6,18.8 16.4,18.8 M17.4,20.2 L15.8,18.8 L17.4,17.2" fill="none" stroke="#666" stroke-width="1.4"/></svg>
<svg style="left:3px;top:36px" width="4" height="28" viewBox="0 0 4 28"><rect x="0" y="0" width="2" height="2" fill="#ffffff"/><rect x="1" y="1" width="2" height="2" fill="#b4b4b4"/><rect x="0" y="4" width="2" height="2" fill="#ffffff"/><rect x="1" y="5" width="2" height="2" fill="#b4b4b4"/><rect x="0" y="8" width="2" height="2" fill="#ffffff"/><rect x="1" y="9" width="2" height="2" fill="#b4b4b4"/><rect x="0" y="12" width="2" height="2" fill="#ffffff"/><rect x="1" y="13" width="2" height="2" fill="#b4b4b4"/><rect x="0" y="16" width="2" height="2" fill="#ffffff"/><rect x="1" y="17" width="2" height="2" fill="#b4b4b4"/><rect x="0" y="20" width="2" height="2" fill="#ffffff"/><rect x="1" y="21" width="2" height="2" fill="#b4b4b4"/><rect x="0" y="24" width="2" height="2" fill="#ffffff"/><rect x="1" y="25" width="2" height="2" fill="#b4b4b4"/></svg>
<svg style="left:13px;top:38px" width="24" height="24" viewBox="0 0 24 24"><circle cx="12" cy="12" r="3.7" fill="#cc0000" stroke="#960000" stroke-width="0.7"/></svg>
<svg style="left:44px;top:38px" width="24" height="24" viewBox="0 0 24 24"><path d="M3.8,4.6 Q11,0.6 20.4,6.8 L15.8,20 L7,16" fill="none" stroke="#2e3436" stroke-width="2.6" stroke-linecap="round"/><path d="M3.8,4.6 Q11,0.6 20.4,6.8 L15.8,20 L7,16" fill="none" stroke="#ffffff" stroke-width="1.1" stroke-linecap="round"/><circle cx="3.8" cy="4.6" r="2.5" fill="#cf0000" stroke="#7a0000" stroke-width="0.7"/><circle cx="20.5" cy="6.8" r="2.5" fill="#cf0000" stroke="#7a0000" stroke-width="0.7"/><circle cx="15.7" cy="20" r="2.5" fill="#cf0000" stroke="#7a0000" stroke-width="0.7"/><circle cx="7.1" cy="16" r="2.5" fill="#cf0000" stroke="#7a0000" stroke-width="0.7"/></svg>
<svg style="left:75px;top:38px" width="24" height="24" viewBox="0 0 24 24"><path d="M3.4,20.4 L20.4,3.6" fill="none" stroke="#2e3436" stroke-width="2.8" stroke-linecap="round"/><path d="M3.4,20.4 L20.4,3.6" fill="none" stroke="#ffffff" stroke-width="1.2999999999999998" stroke-linecap="round"/><circle cx="3.4" cy="20.4" r="2.6" fill="#cf0000" stroke="#7a0000" stroke-width="0.7"/><circle cx="20.4" cy="3.6" r="2.6" fill="#cf0000" stroke="#7a0000" stroke-width="0.7"/></svg>
<svg style="left:106px;top:38px" width="24" height="24" viewBox="0 0 24 24"><path d="M5.2,5.2 Q16,6 18.8,19" fill="none" stroke="#2e3436" stroke-width="2.8" stroke-linecap="round"/><path d="M5.2,5.2 Q16,6 18.8,19" fill="none" stroke="#ffffff" stroke-width="1.2999999999999998" stroke-linecap="round"/><circle cx="5.2" cy="5.2" r="2.6" fill="#cf0000" stroke="#7a0000" stroke-width="0.7"/><circle cx="18.8" cy="19" r="2.6" fill="#cf0000" stroke="#7a0000" stroke-width="0.7"/><circle cx="5.2" cy="18.8" r="2.6" fill="#cf0000" stroke="#7a0000" stroke-width="0.7"/></svg>
<div class="dd" style="left:135.5px;top:48.0px"></div>
<svg style="left:148px;top:38px" width="24" height="24" viewBox="0 0 24 24"><circle cx="12.2" cy="12" r="9.6" fill="none" stroke="#2e3436" stroke-width="2.9"/><circle cx="12.2" cy="12" r="9.6" fill="none" stroke="#fff" stroke-width="1.3"/><circle cx="12.2" cy="12" r="2.5" fill="#cf0000" stroke="#7a0000" stroke-width="0.7"/><circle cx="21.3" cy="12" r="2.5" fill="#cf0000" stroke="#7a0000" stroke-width="0.7"/></svg>
<div class="dd" style="left:178.3px;top:48.0px"></div>
<svg style="left:192px;top:38px" width="24" height="24" viewBox="0 0 24 24"><rect x="3.5" y="3.5" width="17" height="17" fill="none" stroke="#2e3436" stroke-width="1"/><rect x="4.5" y="4.5" width="15" height="15" fill="none" stroke="#fff" stroke-width="1"/><rect x="5.5" y="5.5" width="13" height="13" fill="none" stroke="#2e3436" stroke-width="1"/><circle cx="19.8" cy="4.5" r="2.4" fill="#cf0000" stroke="#7a0000" stroke-width="0.7"/><circle cx="4.6" cy="19.7" r="2.4" fill="#cf0000" stroke="#7a0000" stroke-width="0.7"/></svg>
<div class="dd" style="left:221.4px;top:48.0px"></div>
<svg style="left:235px;top:38px" width="24" height="24" viewBox="0 0 24 24"><path d="M11.8,1.8 L21,7 L21,17.4 L11.8,22.6 L2.6,17.4 L2.6,7 Z" fill="none" stroke="#55595a" stroke-width="3" stroke-linejoin="round"/><path d="M11.8,1.8 L21,7 L21,17.4 L11.8,22.6 L2.6,17.4 L2.6,7 Z" fill="none" stroke="#fff" stroke-width="1.3" stroke-linejoin="round"/><path d="M20.2,9 L20.2,17" stroke="#9a9a9a" stroke-width="1.6"/><circle cx="11.8" cy="12" r="2.5" fill="#cf0000" stroke="#7a0000" stroke-width="0.7"/><circle cx="20.7" cy="7.3" r="2.5" fill="#cf0000" stroke="#7a0000" stroke-width="0.7"/></svg>
<div class="dd" style="left:264.5px;top:48.0px"></div>
<svg style="left:278px;top:38px" width="24" height="24" viewBox="0 0 24 24"><rect x="2.2" y="5.5" width="19.6" height="13" rx="6.5" fill="none" stroke="#2e3436" stroke-width="2.9"/><rect x="2.2" y="5.5" width="19.6" height="13" rx="6.5" fill="none" stroke="#fff" stroke-width="1.2"/><circle cx="7.2" cy="12" r="2.6" fill="#cf0000" stroke="#7a0000" stroke-width="0.7"/><circle cx="16.7" cy="12" r="2.6" fill="#cf0000" stroke="#7a0000" stroke-width="0.7"/></svg>
<div class="dd" style="left:307.3px;top:48.0px"></div>
<svg style="left:321px;top:38px" width="24" height="24" viewBox="0 0 24 24"><path d="M3.5,20.4 C4,11 9,13.4 12,12.6 C16,11.6 20,10.6 20.5,3.6" fill="none" stroke="#2e3436" stroke-width="2.8" stroke-linecap="round"/><path d="M3.5,20.4 C4,11 9,13.4 12,12.6 C16,11.6 20,10.6 20.5,3.6" fill="none" stroke="#ffffff" stroke-width="1.2999999999999998" stroke-linecap="round"/><circle cx="5.5" cy="5.8" r="2.5" fill="#cf0000" stroke="#7a0000" stroke-width="0.7"/><circle cx="20.5" cy="3.4" r="2.5" fill="#cf0000" stroke="#7a0000" stroke-width="0.7"/><circle cx="3.5" cy="20.4" r="2.5" fill="#cf0000" stroke="#7a0000" stroke-width="0.7"/><circle cx="17.9" cy="18.7" r="2.5" fill="#cf0000" stroke="#7a0000" stroke-width="0.7"/></svg>
<div class="dd" style="left:350.4px;top:48.0px"></div>
<div class="sep" style="left:363px;top:38px;height:25px;background:#c6c6c6"></div>
<svg style="left:369px;top:38px" width="24" height="24" viewBox="0 0 24 24"><path d="M2,3.6 L21.6,23 L23.4,21.2 L3.8,1.8 Z" fill="#fff" stroke="#4a4a4a" stroke-width="1"/><path d="M10.6,1.4 L23.6,14.4" stroke="#1c3f78" stroke-width="2.4" stroke-dasharray="4.4 1.6"/><path d="M10.6,1.4 L23.6,14.4" stroke="#3465a4" stroke-width="1" stroke-dasharray="4.4 1.6"/></svg>
<div class="sep" style="left:399px;top:34px;height:32px;background:#b0b0b0"></div><div class="sep" style="left:400px;top:34px;height:32px;background:#ffffff"></div>
<svg style="left:403px;top:36px" width="4" height="28" viewBox="0 0 4 28"><rect x="0" y="0" width="2" height="2" fill="#ffffff"/><rect x="1" y="1" width="2" height="2" fill="#b4b4b4"/><rect x="0" y="4" width="2" height="2" fill="#ffffff"/><rect x="1" y="5" width="2" height="2" fill="#b4b4b4"/><rect x="0" y="8" width="2" height="2" fill="#ffffff"/><rect x="1" y="9" width="2" height="2" fill="#b4b4b4"/><rect x="0" y="12" width="2" height="2" fill="#ffffff"/><rect x="1" y="13" width="2" height="2" fill="#b4b4b4"/><rect x="0" y="16" width="2" height="2" fill="#ffffff"/><rect x="1" y="17" width="2" height="2" fill="#b4b4b4"/><rect x="0" y="20" width="2" height="2" fill="#ffffff"/><rect x="1" y="21" width="2" height="2" fill="#b4b4b4"/><rect x="0" y="24" width="2" height="2" fill="#ffffff"/><rect x="1" y="25" width="2" height="2" fill="#b4b4b4"/></svg>
<svg style="left:413px;top:38px" width="24" height="24" viewBox="0 0 24 24"><path d="M1.2,12.4 L18.3,2.2 L22.3,8.3 L5.6,18 Z" fill="#ffffff"/><path d="M1.2,12.4 L18.3,2.2" stroke="#7a0000" stroke-width="1.8"/><path d="M1.2,12.4 L18.3,2.2" stroke="#cf0000" stroke-width="0.9"/><path d="M1.2,12.2 L5.4,18 M18.3,2.2 L22.4,8.4" stroke="#7a0000" stroke-width="1.7" stroke-linecap="round"/><path d="M3,11.6 L5.4,8.8 L6.4,10.6 Z M16.6,3.2 L14.2,6 L13.2,4.2 Z" fill="#cf0000" stroke="#7a0000" stroke-width="0.5"/><path d="M18.4,10.4 Q20.6,15 19.4,20.4" fill="none" stroke="#7a0000" stroke-width="1.1"/><path d="M22,7.8 L7,16.6 L21.6,22" fill="none" stroke="#7a0000" stroke-width="2.60" stroke-linecap="round" stroke-linejoin="round"/><path d="M22,7.8 L7,16.6 L21.6,22" fill="none" stroke="#dc1010" stroke-width="1.20" stroke-linecap="round" stroke-linejoin="round"/></svg>
<div class="dd" style="left:442.5px;top:48.0px"></div>
<div class="sep" style="left:455px;top:38px;height:25px;background:#c6c6c6"></div>
<svg style="left:463px;top:38px" width="24" height="24" viewBox="0 0 24 24"><path d="M1.4,4 L21.4,4" fill="none" stroke="#7a0000" stroke-width="2.90" stroke-linecap="round" stroke-linejoin="round"/><path d="M1.4,4 L21.4,4" fill="none" stroke="#dc1010" stroke-width="1.50" stroke-linecap="round" stroke-linejoin="round"/><circle cx="12.6" cy="4" r="2.9" fill="#cf0000" stroke="#7a0000" stroke-width="0.8"/><path d="M12.6,7 L12.6,16" stroke="#cf0000" stroke-width="1.6" stroke-dasharray="2 1.4"/><path d="M12.6,6.8 L14.8,10.4 L10.4,10.4 Z" fill="#cf0000" stroke="#7a0000" stroke-width="0.5"/><circle cx="12.6" cy="19" r="2.5" fill="#fff" stroke="#a00000" stroke-width="1.1"/></svg>
<svg style="left:493px;top:38px" width="24" height="24" viewBox="0 0 24 24"><path d="M8.4,2.2 L8.4,22" fill="none" stroke="#7a0000" stroke-width="2.90" stroke-linecap="butt" stroke-linejoin="round"/><path d="M8.4,2.2 L8.4,22" fill="none" stroke="#dc1010" stroke-width="1.50" stroke-linecap="butt" stroke-linejoin="round"/><path d="M1.6,15.6 L22.6,15.6" fill="none" stroke="#7a0000" stroke-width="2.90" stroke-linecap="butt" stroke-linejoin="round"/><path d="M1.6,15.6 L22.6,15.6" fill="none" stroke="#dc1010" stroke-width="1.50" stroke-linecap="butt" stroke-linejoin="round"/><path d="M4,5.6 L4,10.6" fill="none" stroke="#7a0000" stroke-width="2.70" stroke-linecap="butt" stroke-linejoin="round"/><path d="M4,5.6 L4,10.6" fill="none" stroke="#dc1010" stroke-width="1.30" stroke-linecap="butt" stroke-linejoin="round"/><path d="M13.6,11 L18.6,11" fill="none" stroke="#7a0000" stroke-width="2.70" stroke-linecap="butt" stroke-linejoin="round"/><path d="M13.6,11 L18.6,11" fill="none" stroke="#dc1010" stroke-width="1.30" stroke-linecap="butt" stroke-linejoin="round"/></svg>
<div class="dd" style="left:522.6px;top:48.0px"></div>
<svg style="left:536px;top:38px" width="24" height="24" viewBox="0 0 24 24"><path d="M2.4,18.8 L15.4,5.4" fill="none" stroke="#7a0000" stroke-width="2.70" stroke-linecap="round" stroke-linejoin="round"/><path d="M2.4,18.8 L15.4,5.4" fill="none" stroke="#dc1010" stroke-width="1.30" stroke-linecap="round" stroke-linejoin="round"/><path d="M8.6,18.8 L22.2,5.4" fill="none" stroke="#7a0000" stroke-width="2.70" stroke-linecap="round" stroke-linejoin="round"/><path d="M8.6,18.8 L22.2,5.4" fill="none" stroke="#dc1010" stroke-width="1.30" stroke-linecap="round" stroke-linejoin="round"/></svg>
<svg style="left:567px;top:38px" width="24" height="24" viewBox="0 0 24 24"><path d="M2,7.8 L15.8,21.6" fill="none" stroke="#7a0000" stroke-width="2.70" stroke-linecap="round" stroke-linejoin="round"/><path d="M2,7.8 L15.8,21.6" fill="none" stroke="#dc1010" stroke-width="1.30" stroke-linecap="round" stroke-linejoin="round"/><path d="M9.6,14.8 L20.6,4.2" fill="none" stroke="#7a0000" stroke-width="2.70" stroke-linecap="round" stroke-linejoin="round"/><path d="M9.6,14.8 L20.6,4.2" fill="none" stroke="#dc1010" stroke-width="1.30" stroke-linecap="round" stroke-linejoin="round"/></svg>
<svg style="left:598px;top:38px" width="24" height="24" viewBox="0 0 24 24"><path d="M1.8,8.2 Q14,7.4 16,21.6" fill="none" stroke="#7a0000" stroke-width="2.50" stroke-linecap="round" stroke-linejoin="round"/><path d="M1.8,8.2 Q14,7.4 16,21.6" fill="none" stroke="#dc1010" stroke-width="1.10" stroke-linecap="round" stroke-linejoin="round"/><path d="M5.6,2 L21.4,18.2" fill="none" stroke="#7a0000" stroke-width="2.70" stroke-linecap="round" stroke-linejoin="round"/><path d="M5.6,2 L21.4,18.2" fill="none" stroke="#dc1010" stroke-width="1.30" stroke-linecap="round" stroke-linejoin="round"/></svg>
<svg style="left:629px;top:38px" width="24" height="24" viewBox="0 0 24 24"><path d="M6,9 L17.6,9" fill="none" stroke="#7a0000" stroke-width="2.90" stroke-linecap="butt" stroke-linejoin="round"/><path d="M6,9 L17.6,9" fill="none" stroke="#dc1010" stroke-width="1.50" stroke-linecap="butt" stroke-linejoin="round"/><path d="M6,14.6 L17.6,14.6" fill="none" stroke="#7a0000" stroke-width="2.90" stroke-linecap="butt" stroke-linejoin="round"/><path d="M6,14.6 L17.6,14.6" fill="none" stroke="#dc1010" stroke-width="1.50" stroke-linecap="butt" stroke-linejoin="round"/></svg>
<svg style="left:660px;top:38px" width="24" height="24" viewBox="0 0 24 24"><path d="M2.8,6 L9.4,12 L2.8,18" fill="none" stroke="#7a0000" stroke-width="2.80" stroke-linecap="round" stroke-linejoin="round"/><path d="M2.8,6 L9.4,12 L2.8,18" fill="none" stroke="#dc1010" stroke-width="1.40" stroke-linecap="round" stroke-linejoin="round"/><path d="M21.4,6 L14.8,12 L21.4,18" fill="none" stroke="#7a0000" stroke-width="2.80" stroke-linecap="round" stroke-linejoin="round"/><path d="M21.4,6 L14.8,12 L21.4,18" fill="none" stroke="#dc1010" stroke-width="1.40" stroke-linecap="round" stroke-linejoin="round"/></svg>
<svg style="left:691px;top:38px" width="24" height="24" viewBox="0 0 24 24"><circle cx="12" cy="12" r="7" fill="#fff"/><path d="M7.2,7.2 L16.8,16.8 M16.8,7.2 L7.2,16.8" fill="none" stroke="#7a0000" stroke-width="2.40" stroke-linecap="round" stroke-linejoin="round"/><path d="M7.2,7.2 L16.8,16.8 M16.8,7.2 L7.2,16.8" fill="none" stroke="#dc1010" stroke-width="1.00" stroke-linecap="round" stroke-linejoin="round"/><circle cx="12" cy="12" r="7.1" fill="none" stroke="#7a0000" stroke-width="2.7"/><circle cx="12" cy="12" r="7.1" fill="none" stroke="#dc1010" stroke-width="1.4"/></svg>
<div class="sep" style="left:721px;top:38px;height:25px;background:#c6c6c6"></div>
<svg style="left:728px;top:38px" width="24" height="24" viewBox="0 0 24 24"><path d="M2,3.4 L6.2,4.2 L5.2,5.2 L19,19 L20,18 L20.8,22.2 L16.6,21.4 L17.6,20.4 L3.8,6.6 L2.8,7.6 Z" fill="#dc1010" stroke="#7a0000" stroke-width="0.8" stroke-linejoin="round"/><path d="M9.6,2.2 L13.6,3 L12.7,3.9 L20.3,11.5 L21.2,10.6 L22,14.6 L18,13.8 L18.9,12.9 L11.3,5.3 L10.4,6.2 Z" fill="#5a8fd0" stroke="#1f4478" stroke-width="0.8" stroke-linejoin="round"/></svg>
<div class="dd" style="left:757.4px;top:48.0px"></div>
<div class="sep" style="left:769px;top:34px;height:32px;background:#b0b0b0"></div><div class="sep" style="left:770px;top:34px;height:32px;background:#ffffff"></div>
<svg style="left:773px;top:36px" width="4" height="28" viewBox="0 0 4 28"><rect x="0" y="0" width="2" height="2" fill="#ffffff"/><rect x="1" y="1" width="2" height="2" fill="#b4b4b4"/><rect x="0" y="4" width="2" height="2" fill="#ffffff"/><rect x="1" y="5" width="2" height="2" fill="#b4b4b4"/><rect x="0" y="8" width="2" height="2" fill="#ffffff"/><rect x="1" y="9" width="2" height="2" fill="#b4b4b4"/><rect x="0" y="12" width="2" height="2" fill="#ffffff"/><rect x="1" y="13" width="2" height="2" fill="#b4b4b4"/><rect x="0" y="16" width="2" height="2" fill="#ffffff"/><rect x="1" y="17" width="2" height="2" fill="#b4b4b4"/><rect x="0" y="20" width="2" height="2" fill="#ffffff"/><rect x="1" y="21" width="2" height="2" fill="#b4b4b4"/><rect x="0" y="24" width="2" height="2" fill="#ffffff"/><rect x="1" y="25" width="2" height="2" fill="#b4b4b4"/></svg>
<svg style="left:783px;top:38px" width="24" height="24" viewBox="0 0 24 24"><path d="M4.6,1.6 L4.6,8" fill="none" stroke="#2e3436" stroke-width="2.8" stroke-linecap="round"/><path d="M4.6,1.6 L4.6,8" fill="none" stroke="#ffffff" stroke-width="1.2999999999999998" stroke-linecap="round"/><path d="M4.6,8.4 Q5.6,18 15.4,19.4" fill="none" stroke="#2e3436" stroke-width="2.6" stroke-linecap="round"/><path d="M4.6,8.4 Q5.6,18 15.4,19.4" fill="none" stroke="#ffffff" stroke-width="1.1" stroke-linecap="round"/><path d="M15.6,19.6 L22.4,19.6" fill="none" stroke="#2e3436" stroke-width="2.8" stroke-linecap="round"/><path d="M15.6,19.6 L22.4,19.6" fill="none" stroke="#ffffff" stroke-width="1.2999999999999998" stroke-linecap="round"/><path d="M4,13.4 L4,23 M0.8,19.6 L8.6,19.6" stroke="#111" stroke-width="1.7" stroke-dasharray="1.6 0.9"/><circle cx="4.6" cy="8.3" r="2.6" fill="#cf0000" stroke="#7a0000" stroke-width="0.7"/><circle cx="15.6" cy="19.5" r="2.6" fill="#cf0000" stroke="#7a0000" stroke-width="0.7"/></svg>
<div class="dd" style="left:812.5px;top:48.0px"></div>
<svg style="left:826px;top:38px" width="24" height="24" viewBox="0 0 24 24"><path d="M15.2,2.4 L5.6,22" fill="none" stroke="#2e3436" stroke-width="2.7" stroke-linecap="round"/><path d="M15.2,2.4 L5.6,22" fill="none" stroke="#ffffff" stroke-width="1.2000000000000002" stroke-linecap="round"/><path d="M11,11.4 L21.6,22.4" fill="none" stroke="#2e3436" stroke-width="2.7" stroke-linecap="round"/><path d="M11,11.4 L21.6,22.4" fill="none" stroke="#ffffff" stroke-width="1.2000000000000002" stroke-linecap="round"/><path d="M1.6,1.6 L9.6,10" stroke="#3a3a3a" stroke-width="2.2" stroke-dasharray="2.4 2.6" stroke-linecap="round"/><path d="M1.6,1.6 L9.6,10" stroke="#e8e8e8" stroke-width="0.8" stroke-dasharray="2.4 2.6" stroke-linecap="round"/><circle cx="10.8" cy="11" r="2.7" fill="#cf0000" stroke="#7a0000" stroke-width="0.7"/></svg>
<div class="dd" style="left:855.4px;top:48.0px"></div>
<svg style="left:868px;top:38px" width="24" height="24" viewBox="0 0 24 24"><path d="M2,14.6 L14.4,11.2 L22.2,13.4 L22,20.6 L13.6,23.4 L2,21.6 Z" fill="#2b5a9a" stroke="#16325c" stroke-width="1" stroke-linejoin="round"/><path d="M2,14.6 L14.4,11.2 L22.2,13.4 L13.8,16.6 Z" fill="#5b8fd0" stroke="#16325c" stroke-width="0.8" stroke-linejoin="round"/><path d="M13.8,16.6 L13.6,23.4" stroke="#16325c" stroke-width="0.8"/><path d="M2.8,15.8 L13.2,17.6 L13,22.4 L2.8,20.8 Z" fill="#3f75ba"/><path d="M9,3.8 L21,3.8" stroke="#1b3f73" stroke-width="3"/><path d="M9,3.8 L21,3.8" stroke="#4a86cf" stroke-width="1.6"/><path d="M15.6,5.4 L14.8,8 L13,8 L15,10.6 L17.8,8.6 L16.4,8.2 L17.2,5.4 Z" fill="#4a86cf" stroke="#1b3f73" stroke-width="0.7"/><circle cx="8.6" cy="3.8" r="2.6" fill="#cf0000" stroke="#7a0000" stroke-width="0.7"/><circle cx="21.4" cy="3.8" r="2.6" fill="#cf0000" stroke="#7a0000" stroke-width="0.7"/></svg>
<svg style="left:899px;top:38px" width="24" height="24" viewBox="0 0 24 24"><rect x="8.8" y="4.4" width="12.4" height="12" fill="#fff" stroke="#3b7a04" stroke-width="2.8"/><rect x="8.8" y="4.4" width="12.4" height="12" fill="none" stroke="#4e9a06" stroke-width="1.6"/><rect x="5" y="8.6" width="13.6" height="13" rx="1.4" fill="none" stroke="#8e9290" stroke-width="2.8"/><rect x="5" y="8.6" width="13.6" height="13" rx="1.4" fill="none" stroke="#f2f2f2" stroke-width="1.1"/></svg>
<div class="sep" style="left:930px;top:38px;height:25px;background:#c6c6c6"></div>
<svg style="left:937px;top:38px" width="24" height="24" viewBox="0 0 24 24"><path d="M4.4,10.6 L4.4,20" fill="none" stroke="#8a8a8a" stroke-width="2.8" stroke-linecap="round"/><path d="M4.4,10.6 L4.4,20" fill="none" stroke="#dcdcdc" stroke-width="1.2999999999999998" stroke-linecap="round"/><circle cx="4.4" cy="10.6" r="2.7" fill="#8e8e8e"/><circle cx="4.4" cy="20" r="2.7" fill="#8e8e8e"/><path d="M12.2,7 L12.2,16.6" fill="none" stroke="#8a8a8a" stroke-width="2.8" stroke-linecap="round"/><path d="M12.2,7 L12.2,16.6" fill="none" stroke="#dcdcdc" stroke-width="1.2999999999999998" stroke-linecap="round"/><circle cx="12.2" cy="7" r="2.7" fill="#8e8e8e"/><circle cx="12.2" cy="16.6" r="2.7" fill="#8e8e8e"/><path d="M20,3.6 L20,13" fill="none" stroke="#8a8a8a" stroke-width="2.8" stroke-linecap="round"/><path d="M20,3.6 L20,13" fill="none" stroke="#dcdcdc" stroke-width="1.2999999999999998" stroke-linecap="round"/><circle cx="20" cy="3.6" r="2.7" fill="#8e8e8e"/><circle cx="20" cy="13" r="2.7" fill="#8e8e8e"/></svg>
<svg style="left:968px;top:38px" width="24" height="24" viewBox="0 0 24 24"><path d="M22.6,11.0 L18.3,18.4 L9.7,18.4 L5.4,11.0 L9.7,3.6 L18.3,3.6 Z" fill="none" stroke="#b0b0b0" stroke-width="1.5"/><path d="M18.6,16.5 L11.7,21.4 L4.1,17.8 L3.4,9.5 L10.3,4.6 L17.9,8.2 Z" fill="none" stroke="#9a9a9a" stroke-width="1.5"/><path d="M16.4,12.6 L13.2,15.8 L8.7,14.7 L7.6,10.2 L10.8,7.0 L15.3,8.1 Z" fill="none" stroke="#9a9a9a" stroke-width="1.2"/><path d="M3,8.6 Q5,2 12.6,2.2 L11.6,5.2 Q7,5 5.8,9.6 L7.4,10.4 L2.4,12.4 L1,7.4 Z" fill="#8e8e8e"/><path d="M21.4,15.6 Q19.6,22.6 12,22.2 L13,19.2 Q17.6,19.4 18.6,14.6 L17,13.8 L22,11.8 L23.4,16.8 Z" fill="#8e8e8e"/></svg>
<svg style="left:999px;top:38px" width="24" height="24" viewBox="0 0 24 24"><rect x="1.4" y="1.4" width="21.4" height="21.4" fill="none" stroke="#8e8e8e" stroke-width="2.4" stroke-dasharray="5 2.2" stroke-dashoffset="2.5"/><rect x="1.4" y="1.4" width="21.4" height="21.4" fill="none" stroke="#f6f6f6" stroke-width="1.1" stroke-dasharray="5 2.2" stroke-dashoffset="2.5"/><rect x="1.6" y="12.4" width="10" height="10" fill="#f0f0f0" stroke="#9a9a9a" stroke-width="1.2"/><rect x="3.6" y="14.4" width="6" height="6" fill="none" stroke="#9a9a9a" stroke-width="1"/><path d="M12.6,10 L17,5.6 L15,3.8 L21,3 L20.2,9 L18.4,7.2 L14.2,11.6 Z" fill="#808080"/></svg>
<svg style="left:1030px;top:38px" width="24" height="24" viewBox="0 0 24 24"><path d="M2,6 L6.6,2 L16.4,2 L16.4,14 Q16.4,21.4 8.4,21.6" fill="none" stroke="#8e8e8e" stroke-width="2.8" stroke-linecap="round"/><path d="M2,6 L6.6,2 L16.4,2 L16.4,14 Q16.4,21.4 8.4,21.6" fill="none" stroke="#f4f4f4" stroke-width="1.2999999999999998" stroke-linecap="round"/><path d="M5.6,9.6 Q6.6,6.6 10.6,6.8 Q12,10 10.8,12.6 Q10,14.6 7.6,14.6" fill="none" stroke="#8e8e8e" stroke-width="2.6" stroke-linecap="round"/><path d="M5.6,9.6 Q6.6,6.6 10.6,6.8 Q12,10 10.8,12.6 Q10,14.6 7.6,14.6" fill="none" stroke="#d8d8d8" stroke-width="1.1" stroke-linecap="round"/><circle cx="16.4" cy="2.6" r="2.5" fill="#8e8e8e"/><circle cx="10.6" cy="7.4" r="2.5" fill="#8e8e8e"/></svg>
<svg style="left:1061px;top:38px" width="24" height="24" viewBox="0 0 24 24"><path d="M4.6,3.6 Q0.6,12 4.6,20.4" fill="none" stroke="#8e8e8e" stroke-width="2.6" stroke-linecap="round"/><path d="M4.6,3.6 Q0.6,12 4.6,20.4" fill="none" stroke="#f4f4f4" stroke-width="1.1" stroke-linecap="round"/><path d="M19.4,3.6 Q23.4,12 19.4,20.4" fill="none" stroke="#8e8e8e" stroke-width="2.6" stroke-linecap="round"/><path d="M19.4,3.6 Q23.4,12 19.4,20.4" fill="none" stroke="#f4f4f4" stroke-width="1.1" stroke-linecap="round"/><path d="M12,7 L12,17" fill="none" stroke="#8a8a8a" stroke-width="2.8" stroke-linecap="round"/><path d="M12,7 L12,17" fill="none" stroke="#dcdcdc" stroke-width="1.2999999999999998" stroke-linecap="round"/><circle cx="5.2" cy="3.4" r="2.8" fill="#8e8e8e"/><circle cx="5.2" cy="20.4" r="2.8" fill="#8e8e8e"/><circle cx="18.8" cy="3.4" r="2.8" fill="#8e8e8e"/><circle cx="18.8" cy="20.4" r="2.8" fill="#8e8e8e"/><circle cx="12" cy="6.6" r="2.8" fill="#8e8e8e"/><circle cx="12" cy="17.4" r="2.8" fill="#8e8e8e"/></svg>
<svg style="left:1092px;top:38px" width="24" height="24" viewBox="0 0 24 24"><rect x="10" y="2.2" width="10" height="10" fill="none" stroke="#b4b4b4" stroke-width="1.3" transform="rotate(-12 15 7)"/><rect x="11" y="3.6" width="10" height="10" fill="#f4f4f4" stroke="#a4a4a4" stroke-width="1.3" transform="rotate(14 16 8.6)"/><path d="M4.6,1.6 L8.4,6.6 L6,6.6 L6,18 L17.4,18 L17.4,15.6 L22.6,19.4 L17.4,23.2 L17.4,20.8 L3.2,20.8 L3.2,6.6 L0.8,6.6 Z" fill="#8e8e8e" stroke="#7a7a7a" stroke-width="0.5"/><circle cx="4.6" cy="19.4" r="2.4" fill="#8e8e8e"/></svg>
<div class="sep" style="left:1121px;top:34px;height:32px;background:#b0b0b0"></div><div class="sep" style="left:1122px;top:34px;height:32px;background:#ffffff"></div>
<svg style="left:1125px;top:36px" width="4" height="28" viewBox="0 0 4 28"><rect x="0" y="0" width="2" height="2" fill="#ffffff"/><rect x="1" y="1" width="2" height="2" fill="#b4b4b4"/><rect x="0" y="4" width="2" height="2" fill="#ffffff"/><rect x="1" y="5" width="2" height="2" fill="#b4b4b4"/><rect x="0" y="8" width="2" height="2" fill="#ffffff"/><rect x="1" y="9" width="2" height="2" fill="#b4b4b4"/><rect x="0" y="12" width="2" height="2" fill="#ffffff"/><rect x="1" y="13" width="2" height="2" fill="#b4b4b4"/><rect x="0" y="16" width="2" height="2" fill="#ffffff"/><rect x="1" y="17" width="2" height="2" fill="#b4b4b4"/><rect x="0" y="20" width="2" height="2" fill="#ffffff"/><rect x="1" y="21" width="2" height="2" fill="#b4b4b4"/><rect x="0" y="24" width="2" height="2" fill="#ffffff"/><rect x="1" y="25" width="2" height="2" fill="#b4b4b4"/></svg>
<svg style="left:1135px;top:38px" width="24" height="24" viewBox="0 0 24 24"><path d="M5,1 L5,23.4" stroke="#2a2a2a" stroke-width="1.3" stroke-dasharray="2.8 1.3" stroke-dashoffset="0.4"/><path d="M1,5 L23.4,5" stroke="#2a2a2a" stroke-width="1.3" stroke-dasharray="2.8 1.3" stroke-dashoffset="0.4"/><path d="M12,1 L12,23.4" stroke="#2a2a2a" stroke-width="1.3" stroke-dasharray="2.8 1.3" stroke-dashoffset="0.4"/><path d="M1,12 L23.4,12" stroke="#2a2a2a" stroke-width="1.3" stroke-dasharray="2.8 1.3" stroke-dashoffset="0.4"/><path d="M19,1 L19,23.4" stroke="#2a2a2a" stroke-width="1.3" stroke-dasharray="2.8 1.3" stroke-dashoffset="0.4"/><path d="M1,19 L23.4,19" stroke="#2a2a2a" stroke-width="1.3" stroke-dasharray="2.8 1.3" stroke-dashoffset="0.4"/></svg>
<div class="dd" style="left:1164.4px;top:48.0px"></div>
<svg style="left:1177px;top:38px" width="24" height="24" viewBox="0 0 24 24"><path d="M5,1 L5,23.4" stroke="#33dd55" stroke-width="1.3" stroke-dasharray="2.8 1.3" stroke-dashoffset="0.4"/><path d="M1,5 L23.4,5" stroke="#33dd55" stroke-width="1.3" stroke-dasharray="2.8 1.3" stroke-dashoffset="0.4"/><path d="M12,1 L12,23.4" stroke="#444" stroke-width="1.3" stroke-dasharray="2.8 1.3" stroke-dashoffset="0.4"/><path d="M1,12 L23.4,12" stroke="#444" stroke-width="1.3" stroke-dasharray="2.8 1.3" stroke-dashoffset="0.4"/><path d="M19,1 L19,23.4" stroke="#444" stroke-width="1.3" stroke-dasharray="2.8 1.3" stroke-dashoffset="0.4"/><path d="M1,19 L23.4,19" stroke="#444" stroke-width="1.3" stroke-dasharray="2.8 1.3" stroke-dashoffset="0.4"/><path d="M8,7.6 L16.6,3.6" stroke="#2e8b0a" stroke-width="3"/><path d="M8,7.6 L16.6,3.6" stroke="#73d216" stroke-width="1.6"/><path d="M10.4,9.6 L22.4,17.6 L18.2,18.4 L20.6,22.4 L18.8,23 L16.4,19.2 L13.6,22 Z" fill="#c8c8c8" stroke="#8a8a8a" stroke-width="0.7"/><circle cx="8" cy="7.6" r="2.2" fill="#cf0000" stroke="#7a0000" stroke-width="0.7"/><circle cx="16.6" cy="3.6" r="2.2" fill="#cf0000" stroke="#7a0000" stroke-width="0.7"/></svg>
<div class="dd" style="left:1207.2px;top:48.0px"></div>
</div>
<div id="side">
 <div id="tabline"></div>
 <div class="tab" id="tabModel"><span style="left:8px;top:5px;letter-spacing:-0.4px">Model</span></div>
 <div class="tab" id="tabTasks">
  <svg style="left:13px;top:1.6px" width="18" height="18" viewBox="0 0 18 18"><g transform="rotate(45 9 9)"><rect x="-0.2" y="6.5" width="14" height="5.2" fill="#1f3d6d"/><rect x="-0.2" y="7.7" width="14" height="0.9" fill="#4f74ac"/><rect x="-0.2" y="9.8" width="14" height="0.8" fill="#2f5590"/><path d="M13.8,6.4 L19,9.1 L13.8,11.8 Z" fill="#ffffff" stroke="#555" stroke-width="0.5"/><path d="M17,8.1 L19.2,9.1 L17,10.1 Z" fill="#222"/></g></svg>
  <span style="left:32.3px;top:6px;letter-spacing:-0.42px">Tasks</span></div>
 <div id="dockTitle"><span>Tasks</span>
  <svg style="left:346px;top:4px" width="8" height="8" viewBox="0 0 8 8"><rect x="0.5" y="0.5" width="6" height="6" fill="none" stroke="#8c8c8c" stroke-width="1"/><rect x="0.5" y="2" width="6" height="1" fill="#8c8c8c"/></svg>
  <svg style="left:365px;top:4px" width="8" height="8" viewBox="0 0 8 8"><rect x="2.5" y="0.5" width="4" height="4" fill="none" stroke="#8c8c8c" stroke-width="1"/><rect x="0.5" y="2.5" width="4" height="4" fill="#f0f0f0" stroke="#8c8c8c" stroke-width="1"/></svg>
 </div>
 <div id="tp"></div>
 <div id="closeBtn"><span>Close</span></div>

 <div class="box" style="top:97px;height:74px">
  <div class="bh">
   <svg style="left:4px;top:2px" width="18" height="18" viewBox="0 0 18 18"><rect x="2.2" y="6.8" width="9.6" height="9.2" rx="0.8" fill="none" stroke="#cc0000" stroke-width="1.4"/><circle cx="11" cy="6.6" r="4.6" fill="none" stroke="#cc0000" stroke-width="1.3"/></svg>
   <b>Solver messages</b>
   <svg style="left:335.3px;top:1.4px" width="20" height="20" viewBox="0 0 20 20"><circle cx="10" cy="10" r="7.8" fill="#ffffff" stroke="#b4bad8" stroke-width="1.5"/><path d="M6.8,9.2 L10,6 L13.2,9.2 M6.8,13.2 L10,10 L13.2,13.2" fill="none" stroke="#12299c" stroke-width="1.5"/></svg>
  </div>
  <div class="bb" style="height:50px">
   <span class="abs" style="left:12px;top:19px;color:#008000;white-space:nowrap;letter-spacing:-0.13px">Fully constrained</span>
   <div class="btn" style="left:309px;top:14px;width:33px;height:20px">
    <svg style="left:2px;top:1px" width="16" height="16" viewBox="0 0 16 16"><path d="M1.6,7.4 Q2,2.4 7.6,2.2 L10.6,2.2 L10.6,0.6 L14.8,3.8 L10.6,7 L10.6,5.2 L7.6,5.2 Q4.8,5.4 4.6,7.6 Z" fill="#5b92d4" stroke="#2c5e9e" stroke-width="0.7"/><path d="M14.4,8.6 Q14,13.6 8.4,13.8 L5.4,13.8 L5.4,15.4 L1.2,12.2 L5.4,9 L5.4,10.8 L8.4,10.8 Q11.2,10.6 11.4,8.4 Z" fill="#5b92d4" stroke="#2c5e9e" stroke-width="0.7"/></svg>
    <div class="abs" style="left:19px;top:2px;width:1px;height:14px;background:#fff"></div><div class="abs" style="left:20px;top:2px;width:1px;height:14px;background:#a0a0a0"></div>
    <div class="dd" style="left:22.5px;top:7.5px;border-left-width:3.6px;border-right-width:3.6px;border-top-width:4.2px"></div>
   </div>
  </div>
 </div>

 <div class="box" style="top:179px;height:272px">
  <div class="bh">
   <svg style="left:4px;top:2px" width="18" height="18" viewBox="0 0 18 18"><path d="M3,14.6 L13.6,3.6" stroke="#222" stroke-width="2.6"/><path d="M3,14.6 L13.6,3.6" stroke="#fff" stroke-width="1.3" stroke-dasharray="1 1"/><circle cx="2.8" cy="14.8" r="1.9" fill="#d40000" stroke="#8a0000" stroke-width="0.5"/><circle cx="14" cy="3.4" r="1.9" fill="#d40000" stroke="#8a0000" stroke-width="0.5"/><path d="M3.2,9.4 L8.4,4" stroke="#d40000" stroke-width="1.8"/><path d="M1.6,10.8 L2.4,7.4 L5,10 Z M10,2.4 L9.2,5.8 L6.6,3.2 Z" fill="#d40000"/><path d="M7,15.4 L14.8,15.4 M7.4,15.2 L12.6,9.6 M11.6,11.4 Q13,13 12.8,15" fill="none" stroke="#c00000" stroke-width="1.4"/></svg>
   <b>Constraints</b>
   <svg style="left:335.3px;top:1.4px" width="20" height="20" viewBox="0 0 20 20"><circle cx="10" cy="10" r="7.8" fill="#ffffff" stroke="#b4bad8" stroke-width="1.5"/><path d="M6.8,9.2 L10,6 L13.2,9.2 M6.8,13.2 L10,10 L13.2,13.2" fill="none" stroke="#12299c" stroke-width="1.5"/></svg>
  </div>
  <div class="bb" style="height:248px">
   <div class="cb" style="left:13px;top:17px"></div>
   <div id="combo"><span>Filters</span>
    <div class="abs" style="left:218px;top:2px;width:1px;height:15px;background:#fff"></div><div class="abs" style="left:219px;top:2px;width:1px;height:15px;background:#a0a0a0"></div>
    <div class="dd" style="left:222.6px;top:9px;border-top-color:#fff;border-left-width:3.8px;border-right-width:3.8px;border-top-width:4.4px"></div>
    <div class="dd" style="left:221.6px;top:8px;border-top-color:#a0a0a0;border-left-width:3.8px;border-right-width:3.8px;border-top-width:4.4px"></div>
   </div>
   <div class="btn" style="left:280px;top:14px;width:21px;height:20px">
    <svg style="left:2px;top:2px" width="16" height="14" viewBox="0 0 16 14"><path d="M0.6,7 Q8,-0.6 15.4,7 Q8,14.6 0.6,7 Z" fill="#ffffff" stroke="#777" stroke-width="1.1"/><circle cx="8" cy="7" r="3.9" fill="#3d7ac8"/><circle cx="8" cy="7" r="1.9" fill="#222"/></svg>
   </div>
   <div class="btn" style="left:309px;top:14px;width:33px;height:20px">
    <svg style="left:2px;top:2px" width="16" height="15" viewBox="0 0 16 15"><path d="M2.4,1.6 L12.6,12.6" stroke="#cfcfcf" stroke-width="2.4" stroke-linecap="round"/><path d="M4.6,1.4 Q7.6,1.2 7.2,4.2" fill="none" stroke="#c8c8c8" stroke-width="1.6"/><path d="M12.6,1.2 L9.4,5.4" stroke="#b8c4dc" stroke-width="1.6" stroke-linecap="round"/><path d="M9,5.8 L3,13" stroke="#3a6fb6" stroke-width="3" stroke-linecap="round"/><path d="M8.6,6.8 L3.6,12.6" stroke="#6fa0dc" stroke-width="1" stroke-linecap="round"/></svg>
    <div class="abs" style="left:19px;top:2px;width:1px;height:14px;background:#fff"></div><div class="abs" style="left:20px;top:2px;width:1px;height:14px;background:#a0a0a0"></div>
    <div class="dd" style="left:22.5px;top:7.5px;border-left-width:3.6px;border-right-width:3.6px;border-top-width:4.2px"></div>
   </div>
   <div id="list">
    <div class="row" style="top:2px">
     <div class="cb" style="left:4px;top:7px;border-color:#444"><svg style="left:0;top:0" width="11" height="11" viewBox="0 0 11 11"><path d="M1.6,5.4 L4.2,8 L9.6,2.4" fill="none" stroke="#505050" stroke-width="1.2"/></svg></div>
     <svg style="left:23px;top:1px" width="24" height="24" viewBox="0 0 24 24"><path d="M3.4,22 Q1.4,5 21.6,3.2" fill="none" stroke="#7a0000" stroke-width="2.9" stroke-linecap="round"/><path d="M3.4,22 Q1.4,5 21.6,3.2" fill="none" stroke="#cc0000" stroke-width="1.6" stroke-linecap="round"/><circle cx="6.8" cy="7.6" r="3" fill="#d40000" stroke="#7a0000" stroke-width="0.7"/></svg>
     <span style="letter-spacing:-0.18px">Constraint1</span>
    </div>
    <div class="row" style="top:30px">
     <div class="cb" style="left:4px;top:7px;border-color:#444"><svg style="left:0;top:0" width="11" height="11" viewBox="0 0 11 11"><path d="M1.6,5.4 L4.2,8 L9.6,2.4" fill="none" stroke="#505050" stroke-width="1.2"/></svg></div>
     <svg style="left:23px;top:1px" width="24" height="24" viewBox="0 0 24 24"><circle cx="12" cy="12" r="8.8" fill="none" stroke="#7a0000" stroke-width="3"/><circle cx="12" cy="12" r="8.8" fill="none" stroke="#cc0000" stroke-width="1.6"/><path d="M3,21.4 L21.6,2.4" stroke="#7a0000" stroke-width="2.8" stroke-linecap="round"/><path d="M3,21.4 L21.6,2.4" stroke="#cc0000" stroke-width="1.5" stroke-linecap="round"/></svg>
     <span style="letter-spacing:-0.08px">Constraint2 (25 mm)</span>
    </div>
    <div class="row" style="top:58px">
     <div class="cb" style="left:4px;top:7px;border-color:#444"><svg style="left:0;top:0" width="11" height="11" viewBox="0 0 11 11"><path d="M1.6,5.4 L4.2,8 L9.6,2.4" fill="none" stroke="#505050" stroke-width="1.2"/></svg></div>
     <svg style="left:23px;top:1px" width="24" height="24" viewBox="0 0 24 24"><path d="M6.4,1.8 L17.4,1.8 M6.4,22 L17.4,22" stroke="#7a0000" stroke-width="3"/><path d="M6.8,1.8 L17,1.8 M6.8,22 L17,22" stroke="#cc0000" stroke-width="1.8"/><path d="M12,3 L12,21" stroke="#a00000" stroke-width="1.8"/><path d="M12,3.2 L14,6.6 L10,6.6 Z M12,20.8 L14,17.4 L10,17.4 Z" fill="#a00000"/></svg>
     <span style="letter-spacing:-0.08px">Constraint3 (35 mm)</span>
    </div>
   </div>
  </div>
 </div>

 <div class="box" style="top:460px;height:25px">
  <div class="bh" style="height:25px">
   <svg style="left:4px;top:2px" width="18" height="18" viewBox="0 0 18 18"><path d="M3,15.4 L14.4,4" stroke="#333" stroke-width="2.4"/><path d="M3,15.4 L14.4,4" stroke="#fff" stroke-width="1.1" stroke-dasharray="1 0.8"/><circle cx="3" cy="15.6" r="1.8" fill="#d40000" stroke="#8a0000" stroke-width="0.5"/><circle cx="14.4" cy="3.8" r="1.8" fill="#d40000" stroke="#8a0000" stroke-width="0.5"/></svg>
   <b>Elements</b>
   <svg style="left:335.3px;top:1.4px" width="20" height="20" viewBox="0 0 20 20"><circle cx="10" cy="10" r="7.8" fill="#ffffff" stroke="#b4bad8" stroke-width="1.5"/><path d="M6.8,9.2 L10,6 L13.2,9.2 M6.8,13.2 L10,10 L13.2,13.2" fill="none" stroke="#12299c" stroke-width="1.5"/></svg>
  </div>
 </div>
</div>

<svg id="vp" width="839" height="604" viewBox="380 67 839 604" style="position:absolute;left:380px;top:67px">
<defs>
<linearGradient id="bg" x1="0" y1="67" x2="0" y2="671" gradientUnits="userSpaceOnUse">
<stop offset="0" stop-color="#363565"/><stop offset="1" stop-color="#8d8da5"/></linearGradient>
<linearGradient id="fil1" x1="735" y1="325" x2="738" y2="358" gradientUnits="userSpaceOnUse">
<stop offset="0" stop-color="#b6b6ce"/><stop offset="0.35" stop-color="#c2c2da"/><stop offset="0.75" stop-color="#b0b0c8"/><stop offset="1" stop-color="#9494a8"/></linearGradient>
<linearGradient id="fil2" x1="930" y1="505" x2="932" y2="534" gradientUnits="userSpaceOnUse">
<stop offset="0" stop-color="#b4b4ca"/><stop offset="0.4" stop-color="#9c9cb0"/><stop offset="1" stop-color="#66666f"/></linearGradient>
<linearGradient id="hole" gradientUnits="userSpaceOnUse" x1="10" y1="1.4" x2="-11.3" y2="0">
<stop offset="0" stop-color="#9e9eae"/><stop offset="0.55" stop-color="#8e8e9e"/><stop offset="1" stop-color="#5c5c66"/></linearGradient>
<linearGradient id="strip" x1="800" y1="460" x2="945" y2="275" gradientUnits="userSpaceOnUse">
<stop offset="0" stop-color="#6c6c78"/><stop offset="0.25" stop-color="#787884"/><stop offset="0.55" stop-color="#8a8a96"/><stop offset="0.78" stop-color="#82828c"/><stop offset="1" stop-color="#666670"/></linearGradient>
<linearGradient id="strip2" x1="945" y1="280" x2="1028" y2="300" gradientUnits="userSpaceOnUse">
<stop offset="0" stop-color="#5e5e66"/><stop offset="0.5" stop-color="#4c4c54"/><stop offset="1" stop-color="#303036"/></linearGradient>
</defs>
<rect x="380" y="67" width="839" height="604" fill="url(#bg)"/>
<polygon points="609,146.5 870,121 879.7,130.8 620,156.2" fill="#5d5d67" stroke="#101010" stroke-width="1.8" stroke-linejoin="round" stroke-linecap="round"/>
<path d="M609,146.5 L620,156.2 L601.5,337 Q602,358 610.7,370.4 L608,393.3 Q590,365 591.3,329.7 Z" fill="#6b6b75" stroke="#101010" stroke-width="1.8" stroke-linejoin="round" stroke-linecap="round"/>
<path d="M591.3,329.7 L601.5,337" fill="none" stroke="#101010" stroke-width="1.8" stroke-linejoin="round" stroke-linecap="round"/>
<path d="M610.7,370.4 L825.5,349.8 Q812,372 807.8,382.1 Q801,404 800.5,420.7 L795.1,460 L791.2,507.9 Q790,520 777.4,520.4 Z" fill="#5c5c66" stroke="#101010" stroke-width="1.8" stroke-linejoin="round" stroke-linecap="round"/>
<polygon points="610.7,370.4 777.4,520.4 775.5,542.7 608,393.3" fill="#696973" stroke="#101010" stroke-width="1.8" stroke-linejoin="round" stroke-linecap="round"/>
<polygon points="620,156.2 879.7,130.8 862,308.6 861.5,312.7 601.5,337" fill="#b5b5cd" stroke="#101010" stroke-width="1.8" stroke-linejoin="round" stroke-linecap="round"/>
<path d="M601.5,337 L861.5,312.7 L840,330 L825.5,349.8 L610.7,370.4 Q602,358 601.5,337 Z" fill="url(#fil1)" stroke="#101010" stroke-width="1.8" stroke-linejoin="round" stroke-linecap="round"/>
<g transform="translate(653.6,190.2)">
<ellipse cx="0" cy="0" rx="12.5" ry="10.7" transform="rotate(-45)" fill="url(#hole)"/>
<path d="M0.6,-11.4 L11.2,-2.2 Q11.6,-6.4 8.4,-9.2 Q5,-11.8 0.6,-11.4 Z" fill="#7c7c8a"/>
<path d="M-10.9,2.6 Q-10.6,-3.4 -5.6,-8 Q-2.4,-10.8 0.6,-11.2 C1.4,-6 -2,-0.6 -10.9,2.6 Z" fill="#48488c"/>
<path d="M0.6,-11.2 C1.4,-6 -2,-0.6 -10.9,2.6 M0.8,-11 L11.2,-2.2" fill="none" stroke="#111" stroke-width="1.5" stroke-linecap="round"/>
<ellipse cx="0" cy="0" rx="12.5" ry="10.7" transform="rotate(-45)" fill="none" stroke="#111" stroke-width="1.7"/>
</g>
<g transform="translate(839.1,172.4)">
<ellipse cx="0" cy="0" rx="12.5" ry="10.7" transform="rotate(-45)" fill="url(#hole)"/>
<path d="M0.6,-11.4 L11.2,-2.2 Q11.6,-6.4 8.4,-9.2 Q5,-11.8 0.6,-11.4 Z" fill="#7c7c8a"/>
<path d="M-10.9,2.6 Q-10.6,-3.4 -5.6,-8 Q-2.4,-10.8 0.6,-11.2 C1.4,-6 -2,-0.6 -10.9,2.6 Z" fill="#48488c"/>
<path d="M0.6,-11.2 C1.4,-6 -2,-0.6 -10.9,2.6 M0.8,-11 L11.2,-2.2" fill="none" stroke="#111" stroke-width="1.5" stroke-linecap="round"/>
<ellipse cx="0" cy="0" rx="12.5" ry="10.7" transform="rotate(-45)" fill="none" stroke="#111" stroke-width="1.7"/>
</g>
<g transform="translate(644.1,284.9)">
<ellipse cx="0" cy="0" rx="12.5" ry="10.7" transform="rotate(-45)" fill="url(#hole)"/>
<path d="M0.6,-11.4 L11.2,-2.2 Q11.6,-6.4 8.4,-9.2 Q5,-11.8 0.6,-11.4 Z" fill="#7c7c8a"/>
<path d="M-10.9,2.6 Q-10.6,-3.4 -5.6,-8 Q-2.4,-10.8 0.6,-11.2 C1.4,-6 -2,-0.6 -10.9,2.6 Z" fill="#48488c"/>
<path d="M0.6,-11.2 C1.4,-6 -2,-0.6 -10.9,2.6 M0.8,-11 L11.2,-2.2" fill="none" stroke="#111" stroke-width="1.5" stroke-linecap="round"/>
<ellipse cx="0" cy="0" rx="12.5" ry="10.7" transform="rotate(-45)" fill="none" stroke="#111" stroke-width="1.7"/>
</g>
<g transform="translate(829.7,267.3)">
<ellipse cx="0" cy="0" rx="12.5" ry="10.7" transform="rotate(-45)" fill="url(#hole)"/>
<path d="M0.6,-11.4 L11.2,-2.2 Q11.6,-6.4 8.4,-9.2 Q5,-11.8 0.6,-11.4 Z" fill="#7c7c8a"/>
<path d="M-10.9,2.6 Q-10.6,-3.4 -5.6,-8 Q-2.4,-10.8 0.6,-11.2 C1.4,-6 -2,-0.6 -10.9,2.6 Z" fill="#48488c"/>
<path d="M0.6,-11.2 C1.4,-6 -2,-0.6 -10.9,2.6 M0.8,-11 L11.2,-2.2" fill="none" stroke="#111" stroke-width="1.5" stroke-linecap="round"/>
<ellipse cx="0" cy="0" rx="12.5" ry="10.7" transform="rotate(-45)" fill="none" stroke="#111" stroke-width="1.7"/>
</g>
<path d="M775.5,542.7 L777.4,520.4 Q790,520 791.2,507.9 L795.1,460 L800.5,420.7 Q803,398 807.8,382.1 Q814,366 825.5,349.8 Q840,328 857.4,312.5 Q872,299 885,291.5 Q903,282 920,278.9 L943,274.3 L968.6,274.7 L992.2,280.4 L1016.5,292 L1027.6,301.8 L1001.4,290.7 L978.4,285.2 L952.2,284.8 L920,292 Q896,302 874.5,316.4 Q860,328 848.5,341.5 Q838,354 831.8,363.4 Q822,381 817.2,394.7 Q812,412 809.9,427.6 L807.2,470 L801,516.7 Q798,538 782.7,547.3 Z" fill="url(#strip)" stroke="#101010" stroke-width="1.8" stroke-linejoin="round" stroke-linecap="round"/>
<path d="M943,274.3 L968.6,274.7 L992.2,280.4 L1016.5,292 L1027.6,301.8 L1001.4,290.7 L978.4,285.2 L952.2,284.8 Z" fill="url(#strip2)" stroke="#101010" stroke-width="1.8" stroke-linejoin="round" stroke-linecap="round"/>
<path d="M943,274.3 L952.2,284.8 M800.5,420.7 L809.9,427.6 M791.2,507.9 L801,516.7 M777.4,520.4 L775.5,542.7" fill="none" stroke="#101010" stroke-width="1.8" stroke-linejoin="round" stroke-linecap="round"/>
<path d="M801,516.7 L807.2,470 L809.9,427.6 Q812,412 817.2,394.7 Q822,381 831.8,363.4 Q838,354 848.5,341.5 Q860,328 874.5,316.4 Q896,302 920,292 L952.2,284.8 L978.4,285.2 L1001.4,290.7 L1027.6,301.8 L1046,319.6 L1060,342.5 L1068.6,368 L1070.5,387.7 L1069.2,418 L1066.6,440 L1060,492.2 Z" fill="#b5b5cd" stroke="#101010" stroke-width="1.8" stroke-linejoin="round" stroke-linecap="round"/>
<path d="M801,516.7 L1060,492.2 Q1058,514 1048.9,521.6 Q1046,523.5 1042,523 L782.7,547.3 Q798,538 801,516.7 Z" fill="url(#fil2)" stroke="#4a4a52" stroke-width="1"/>
<path d="M782.7,547.3 Q798,538 801,516.7 L1060,492.2 Q1058,514 1048.9,521.6 Q1046.5,523.2 1043,523" fill="none" stroke="#101010" stroke-width="1.8" stroke-linejoin="round" stroke-linecap="round"/>
<line x1="380" y1="603" x2="620.7" y2="579.7" stroke="#d05858" stroke-width="1.8"/>
<line x1="927" y1="550" x2="1219" y2="521.5" stroke="#d05858" stroke-width="1.8"/>
<line x1="975.3" y1="67" x2="915.3" y2="671" stroke="#74f08e" stroke-width="2"/>
<text x="512" y="345" font-family="'Liberation Sans',sans-serif" font-size="27" fill="#dce468" fill-opacity="0.42" textLength="196" lengthAdjust="spacingAndGlyphs">Mechnexus.com</text>
<ellipse cx="939.8" cy="417.3" rx="51" ry="42.6" transform="rotate(-50 939.8 417.3)" fill="none" stroke="#08e808" stroke-width="1.9"/>
<line x1="634.7" y1="446.3" x2="939" y2="418.3" stroke="#ffff00" stroke-width="1.9" fill="none"/>
<line x1="620.7" y1="579.7" x2="927" y2="550" stroke="#ffff00" stroke-width="1.9" fill="none"/>
<line x1="903.5" y1="452.8" x2="1065.7" y2="292" stroke="#ffff00" stroke-width="1.9" fill="none"/>
<line x1="672.3" y1="443.6" x2="669" y2="475" stroke="#ffff00" stroke-width="1.9" fill="none"/>
<line x1="662.9" y1="536.8" x2="659.1" y2="575.7" stroke="#ffff00" stroke-width="1.9" fill="none"/>
<polygon points="672.3,443.6 674.2,452.6 668.8,452" fill="#ffff00"/>
<polygon points="659.1,575.7 657.2,566.6 662.6,567.2" fill="#ffff00"/>
<polygon points="903.5,452.8 907.4,444.6 911.8,449" fill="#ffff00"/>
<polygon points="976.3,380.5 972.4,388.6 968,384.2" fill="#ffff00"/>
<rect x="938.6" y="416.6" width="3.6" height="3.6" rx="1" fill="#00d818" transform="rotate(-45 940.4 418.4)"/>
<circle cx="927.2" cy="550.4" r="3.1" fill="#2a8ce6"/>
<circle cx="929" cy="414" r="1" fill="#b02040"/><circle cx="919" cy="425" r="0.8" fill="#b02040"/>
<text transform="translate(669.7,528.4) rotate(-83.5)" font-family="'DejaVu Sans','Liberation Sans',sans-serif" font-weight="200" font-size="15" fill="#ffff00" stroke="#ffff00" stroke-width="0.45" textLength="46.5" lengthAdjust="spacingAndGlyphs">35 mm</text>
<text transform="translate(1075.4,291) rotate(-44.5)" font-family="'DejaVu Sans','Liberation Sans',sans-serif" font-weight="200" font-size="15" fill="#ffff00" stroke="#ffff00" stroke-width="0.45" textLength="62.7" lengthAdjust="spacingAndGlyphs">Ø25 mm</text>
</svg>
</div>
</body></html>
